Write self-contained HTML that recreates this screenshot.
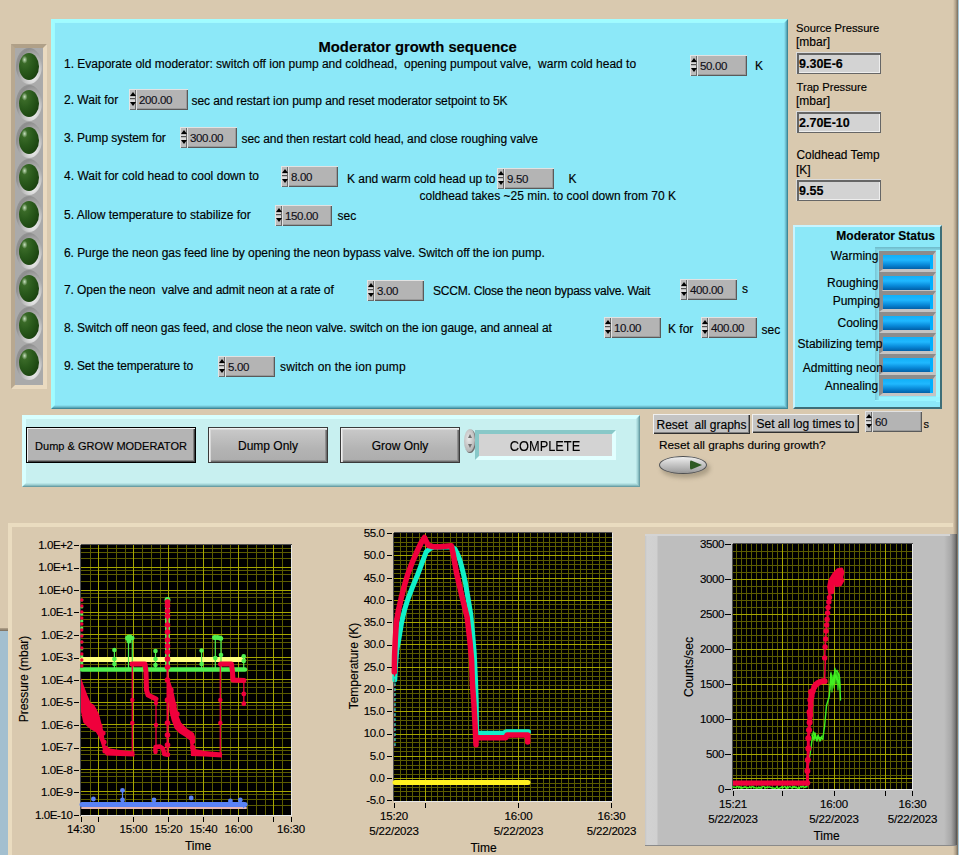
<!DOCTYPE html>
<html><head><meta charset="utf-8"><style>
html,body{margin:0;padding:0;width:959px;height:855px;overflow:hidden;background:#D9C9AF;}
.b{position:absolute;}
.t{position:absolute;white-space:nowrap;font-family:"Liberation Sans", sans-serif;-webkit-text-stroke:0.15px currentColor;}
</style></head><body>
<div class="b" style="left:0;top:0;width:959px;height:855px;background:#D9C9AF;"></div><div class="b" style="left:953px;top:0;width:5px;height:855px;background:linear-gradient(to right,#D9C9AF,#B4A48C 50%,#7A6E5E);"></div><div class="b" style="left:958px;top:0;width:1px;height:855px;background:#A8C8D8;"></div><div class="b" style="left:11px;top:44px;width:28px;height:337px;border:4px solid;border-color:#B0A088 #EADAC0 #EADAC0 #B8A890;background:#AAAAAA;"></div><div class="b" style="left:16px;top:48px;width:26px;height:36px;border-radius:50%;background:radial-gradient(ellipse at 65% 75%, #F4F4F4 0%, #C8C8C8 35%, #8E8E8E 70%, #A0A0A0 100%);"></div><div class="b" style="left:19px;top:52.5px;width:20px;height:27px;border-radius:50%;background:radial-gradient(ellipse at 28% 25%, #C8E0C0 0%, #3A6A28 14%, #2A5A1C 40%, #1E4812 70%, #0E2A08 100%);"></div><div class="b" style="left:16px;top:85px;width:26px;height:36px;border-radius:50%;background:radial-gradient(ellipse at 65% 75%, #F4F4F4 0%, #C8C8C8 35%, #8E8E8E 70%, #A0A0A0 100%);"></div><div class="b" style="left:19px;top:89.5px;width:20px;height:27px;border-radius:50%;background:radial-gradient(ellipse at 28% 25%, #C8E0C0 0%, #3A6A28 14%, #2A5A1C 40%, #1E4812 70%, #0E2A08 100%);"></div><div class="b" style="left:16px;top:122px;width:26px;height:36px;border-radius:50%;background:radial-gradient(ellipse at 65% 75%, #F4F4F4 0%, #C8C8C8 35%, #8E8E8E 70%, #A0A0A0 100%);"></div><div class="b" style="left:19px;top:126.5px;width:20px;height:27px;border-radius:50%;background:radial-gradient(ellipse at 28% 25%, #C8E0C0 0%, #3A6A28 14%, #2A5A1C 40%, #1E4812 70%, #0E2A08 100%);"></div><div class="b" style="left:16px;top:159px;width:26px;height:36px;border-radius:50%;background:radial-gradient(ellipse at 65% 75%, #F4F4F4 0%, #C8C8C8 35%, #8E8E8E 70%, #A0A0A0 100%);"></div><div class="b" style="left:19px;top:163.5px;width:20px;height:27px;border-radius:50%;background:radial-gradient(ellipse at 28% 25%, #C8E0C0 0%, #3A6A28 14%, #2A5A1C 40%, #1E4812 70%, #0E2A08 100%);"></div><div class="b" style="left:16px;top:196px;width:26px;height:36px;border-radius:50%;background:radial-gradient(ellipse at 65% 75%, #F4F4F4 0%, #C8C8C8 35%, #8E8E8E 70%, #A0A0A0 100%);"></div><div class="b" style="left:19px;top:200.5px;width:20px;height:27px;border-radius:50%;background:radial-gradient(ellipse at 28% 25%, #C8E0C0 0%, #3A6A28 14%, #2A5A1C 40%, #1E4812 70%, #0E2A08 100%);"></div><div class="b" style="left:16px;top:233px;width:26px;height:36px;border-radius:50%;background:radial-gradient(ellipse at 65% 75%, #F4F4F4 0%, #C8C8C8 35%, #8E8E8E 70%, #A0A0A0 100%);"></div><div class="b" style="left:19px;top:237.5px;width:20px;height:27px;border-radius:50%;background:radial-gradient(ellipse at 28% 25%, #C8E0C0 0%, #3A6A28 14%, #2A5A1C 40%, #1E4812 70%, #0E2A08 100%);"></div><div class="b" style="left:16px;top:270px;width:26px;height:36px;border-radius:50%;background:radial-gradient(ellipse at 65% 75%, #F4F4F4 0%, #C8C8C8 35%, #8E8E8E 70%, #A0A0A0 100%);"></div><div class="b" style="left:19px;top:274.5px;width:20px;height:27px;border-radius:50%;background:radial-gradient(ellipse at 28% 25%, #C8E0C0 0%, #3A6A28 14%, #2A5A1C 40%, #1E4812 70%, #0E2A08 100%);"></div><div class="b" style="left:16px;top:307px;width:26px;height:36px;border-radius:50%;background:radial-gradient(ellipse at 65% 75%, #F4F4F4 0%, #C8C8C8 35%, #8E8E8E 70%, #A0A0A0 100%);"></div><div class="b" style="left:19px;top:311.5px;width:20px;height:27px;border-radius:50%;background:radial-gradient(ellipse at 28% 25%, #C8E0C0 0%, #3A6A28 14%, #2A5A1C 40%, #1E4812 70%, #0E2A08 100%);"></div><div class="b" style="left:16px;top:344px;width:26px;height:36px;border-radius:50%;background:radial-gradient(ellipse at 65% 75%, #F4F4F4 0%, #C8C8C8 35%, #8E8E8E 70%, #A0A0A0 100%);"></div><div class="b" style="left:19px;top:348.5px;width:20px;height:27px;border-radius:50%;background:radial-gradient(ellipse at 28% 25%, #C8E0C0 0%, #3A6A28 14%, #2A5A1C 40%, #1E4812 70%, #0E2A08 100%);"></div><div class="b" style="left:51px;top:19px;width:735px;height:388px;border:1px solid;border-color:#A4FCFF #3E8898 #3E8898 #A4FCFF;"><div style="position:absolute;left:0;top:0;right:0;bottom:0;border:1px solid;border-color:#A0FCFF #5AAABB #5AAABB #A0FCFF;"><div style="position:absolute;left:0;top:0;right:0;bottom:0;border:1px solid;border-color:#A0FCFF #72C4D4 #72C4D4 #A0FCFF;"><div style="position:absolute;left:0;top:0;right:0;bottom:0;border:1px solid;border-color:#A0FAFF #84DCEC #84DCEC #A0FAFF;"><div style="position:absolute;left:0;top:0;right:0;bottom:0;background:#8CE8F8;"></div></div></div></div></div><div class="t" style="left:318.5px;top:39.07px;font-size:14.8px;line-height:16.8px;color:#000000;font-weight:bold;">Moderator growth sequence</div><div class="t" style="left:64px;top:57.04px;font-size:12px;line-height:14px;color:#000000;">1. Evaporate old moderator: switch off ion pump and coldhead,&nbsp; opening pumpout valve,&nbsp; warm cold head to</div><div class="b" style="left:690px;top:55px;width:7px;height:21px;background:#BCBCBC;box-shadow:inset 1px 1px 0 #E4E4E4, inset -1px -1px 0 #6A6A6A;"></div><div class="b" style="left:690.5px;top:58.0px;width:0;height:0;border-left:3px solid transparent;border-right:3px solid transparent;border-bottom:4.5px solid #000;"></div><div class="b" style="left:690.5px;top:68.0px;width:0;height:0;border-left:3px solid transparent;border-right:3px solid transparent;border-top:4.5px solid #000;"></div><div class="b" style="left:691px;top:62.5px;width:5px;height:1.5px;background:#DADADA;"></div><div class="b" style="left:691px;top:64.0px;width:5px;height:1px;background:#505050;"></div><div class="b" style="left:691px;top:66.0px;width:5px;height:1.5px;background:#DADADA;"></div><div class="b" style="left:697px;top:55px;width:50px;height:21px;background:#B4B4B4;box-shadow:inset 1px 1px 0 #E2E2E2, inset -1px -1px 0 #5A5A5A, inset -2px -2px 0 #9A9A9A;"></div><div class="t" style="left:700px;top:60.27px;font-size:11.5px;line-height:13.5px;color:#101018;letter-spacing:-0.35px;">50.00</div><div class="t" style="left:755px;top:59.04px;font-size:12px;line-height:14px;color:#000000;">K</div><div class="t" style="left:64px;top:92.54px;font-size:12px;line-height:14px;color:#000000;">2. Wait for</div><div class="b" style="left:129px;top:89px;width:7px;height:21px;background:#BCBCBC;box-shadow:inset 1px 1px 0 #E4E4E4, inset -1px -1px 0 #6A6A6A;"></div><div class="b" style="left:129.5px;top:92.0px;width:0;height:0;border-left:3px solid transparent;border-right:3px solid transparent;border-bottom:4.5px solid #000;"></div><div class="b" style="left:129.5px;top:102.0px;width:0;height:0;border-left:3px solid transparent;border-right:3px solid transparent;border-top:4.5px solid #000;"></div><div class="b" style="left:130px;top:96.5px;width:5px;height:1.5px;background:#DADADA;"></div><div class="b" style="left:130px;top:98.0px;width:5px;height:1px;background:#505050;"></div><div class="b" style="left:130px;top:100.0px;width:5px;height:1.5px;background:#DADADA;"></div><div class="b" style="left:136px;top:89px;width:52px;height:21px;background:#B4B4B4;box-shadow:inset 1px 1px 0 #E2E2E2, inset -1px -1px 0 #5A5A5A, inset -2px -2px 0 #9A9A9A;"></div><div class="t" style="left:139px;top:94.27px;font-size:11.5px;line-height:13.5px;color:#101018;letter-spacing:-0.35px;">200.00</div><div class="t" style="left:191.5px;top:93.54px;font-size:12px;line-height:14px;color:#000000;letter-spacing:-0.07px;">sec and restart ion pump and reset moderator setpoint to 5K</div><div class="t" style="left:64px;top:131.44px;font-size:12px;line-height:14px;color:#000000;letter-spacing:-0.09px;">3. Pump system for</div><div class="b" style="left:180px;top:127px;width:7px;height:21px;background:#BCBCBC;box-shadow:inset 1px 1px 0 #E4E4E4, inset -1px -1px 0 #6A6A6A;"></div><div class="b" style="left:180.5px;top:130.0px;width:0;height:0;border-left:3px solid transparent;border-right:3px solid transparent;border-bottom:4.5px solid #000;"></div><div class="b" style="left:180.5px;top:140.0px;width:0;height:0;border-left:3px solid transparent;border-right:3px solid transparent;border-top:4.5px solid #000;"></div><div class="b" style="left:181px;top:134.5px;width:5px;height:1.5px;background:#DADADA;"></div><div class="b" style="left:181px;top:136.0px;width:5px;height:1px;background:#505050;"></div><div class="b" style="left:181px;top:138.0px;width:5px;height:1.5px;background:#DADADA;"></div><div class="b" style="left:187px;top:127px;width:50px;height:21px;background:#B4B4B4;box-shadow:inset 1px 1px 0 #E2E2E2, inset -1px -1px 0 #5A5A5A, inset -2px -2px 0 #9A9A9A;"></div><div class="t" style="left:190px;top:132.27px;font-size:11.5px;line-height:13.5px;color:#101018;letter-spacing:-0.35px;">300.00</div><div class="t" style="left:241.5px;top:132.44px;font-size:12px;line-height:14px;color:#000000;letter-spacing:-0.08px;">sec and then restart cold head, and close roughing valve</div><div class="t" style="left:64px;top:169.04px;font-size:12px;line-height:14px;color:#000000;letter-spacing:0.035px;">4. Wait for cold head to cool down to</div><div class="b" style="left:281px;top:166px;width:7px;height:21px;background:#BCBCBC;box-shadow:inset 1px 1px 0 #E4E4E4, inset -1px -1px 0 #6A6A6A;"></div><div class="b" style="left:281.5px;top:169.0px;width:0;height:0;border-left:3px solid transparent;border-right:3px solid transparent;border-bottom:4.5px solid #000;"></div><div class="b" style="left:281.5px;top:179.0px;width:0;height:0;border-left:3px solid transparent;border-right:3px solid transparent;border-top:4.5px solid #000;"></div><div class="b" style="left:282px;top:173.5px;width:5px;height:1.5px;background:#DADADA;"></div><div class="b" style="left:282px;top:175.0px;width:5px;height:1px;background:#505050;"></div><div class="b" style="left:282px;top:177.0px;width:5px;height:1.5px;background:#DADADA;"></div><div class="b" style="left:288px;top:166px;width:50px;height:21px;background:#B4B4B4;box-shadow:inset 1px 1px 0 #E2E2E2, inset -1px -1px 0 #5A5A5A, inset -2px -2px 0 #9A9A9A;"></div><div class="t" style="left:291px;top:171.27px;font-size:11.5px;line-height:13.5px;color:#101018;letter-spacing:-0.35px;">8.00</div><div class="t" style="left:347px;top:171.54px;font-size:12px;line-height:14px;color:#000000;letter-spacing:-0.04px;">K and warm cold head up to</div><div class="b" style="left:497px;top:168px;width:7px;height:21px;background:#BCBCBC;box-shadow:inset 1px 1px 0 #E4E4E4, inset -1px -1px 0 #6A6A6A;"></div><div class="b" style="left:497.5px;top:171.0px;width:0;height:0;border-left:3px solid transparent;border-right:3px solid transparent;border-bottom:4.5px solid #000;"></div><div class="b" style="left:497.5px;top:181.0px;width:0;height:0;border-left:3px solid transparent;border-right:3px solid transparent;border-top:4.5px solid #000;"></div><div class="b" style="left:498px;top:175.5px;width:5px;height:1.5px;background:#DADADA;"></div><div class="b" style="left:498px;top:177.0px;width:5px;height:1px;background:#505050;"></div><div class="b" style="left:498px;top:179.0px;width:5px;height:1.5px;background:#DADADA;"></div><div class="b" style="left:504px;top:168px;width:50px;height:21px;background:#B4B4B4;box-shadow:inset 1px 1px 0 #E2E2E2, inset -1px -1px 0 #5A5A5A, inset -2px -2px 0 #9A9A9A;"></div><div class="t" style="left:507px;top:173.27px;font-size:11.5px;line-height:13.5px;color:#101018;letter-spacing:-0.35px;">9.50</div><div class="t" style="left:568.5px;top:171.54px;font-size:12px;line-height:14px;color:#000000;">K</div><div class="t" style="left:419.5px;top:189.04px;font-size:12px;line-height:14px;color:#000000;">coldhead takes ~25 min. to cool down from 70 K</div><div class="t" style="left:64px;top:207.64px;font-size:12px;line-height:14px;color:#000000;">5. Allow temperature to stabilize for</div><div class="b" style="left:275px;top:205px;width:7px;height:21px;background:#BCBCBC;box-shadow:inset 1px 1px 0 #E4E4E4, inset -1px -1px 0 #6A6A6A;"></div><div class="b" style="left:275.5px;top:208.0px;width:0;height:0;border-left:3px solid transparent;border-right:3px solid transparent;border-bottom:4.5px solid #000;"></div><div class="b" style="left:275.5px;top:218.0px;width:0;height:0;border-left:3px solid transparent;border-right:3px solid transparent;border-top:4.5px solid #000;"></div><div class="b" style="left:276px;top:212.5px;width:5px;height:1.5px;background:#DADADA;"></div><div class="b" style="left:276px;top:214.0px;width:5px;height:1px;background:#505050;"></div><div class="b" style="left:276px;top:216.0px;width:5px;height:1.5px;background:#DADADA;"></div><div class="b" style="left:282px;top:205px;width:50px;height:21px;background:#B4B4B4;box-shadow:inset 1px 1px 0 #E2E2E2, inset -1px -1px 0 #5A5A5A, inset -2px -2px 0 #9A9A9A;"></div><div class="t" style="left:285px;top:210.27px;font-size:11.5px;line-height:13.5px;color:#101018;letter-spacing:-0.35px;">150.00</div><div class="t" style="left:337.5px;top:208.64px;font-size:12px;line-height:14px;color:#000000;">sec</div><div class="t" style="left:64px;top:245.74px;font-size:12px;line-height:14px;color:#000000;letter-spacing:-0.06px;">6. Purge the neon gas feed line by opening the neon bypass valve. Switch off the ion pump.</div><div class="t" style="left:64px;top:282.54px;font-size:12px;line-height:14px;color:#000000;letter-spacing:-0.088px;">7. Open the neon&nbsp; valve and admit neon at a rate of</div><div class="b" style="left:367px;top:280px;width:7px;height:21px;background:#BCBCBC;box-shadow:inset 1px 1px 0 #E4E4E4, inset -1px -1px 0 #6A6A6A;"></div><div class="b" style="left:367.5px;top:283.0px;width:0;height:0;border-left:3px solid transparent;border-right:3px solid transparent;border-bottom:4.5px solid #000;"></div><div class="b" style="left:367.5px;top:293.0px;width:0;height:0;border-left:3px solid transparent;border-right:3px solid transparent;border-top:4.5px solid #000;"></div><div class="b" style="left:368px;top:287.5px;width:5px;height:1.5px;background:#DADADA;"></div><div class="b" style="left:368px;top:289.0px;width:5px;height:1px;background:#505050;"></div><div class="b" style="left:368px;top:291.0px;width:5px;height:1.5px;background:#DADADA;"></div><div class="b" style="left:374px;top:280px;width:50px;height:21px;background:#B4B4B4;box-shadow:inset 1px 1px 0 #E2E2E2, inset -1px -1px 0 #5A5A5A, inset -2px -2px 0 #9A9A9A;"></div><div class="t" style="left:377px;top:285.27px;font-size:11.5px;line-height:13.5px;color:#101018;letter-spacing:-0.35px;">3.00</div><div class="t" style="left:433px;top:283.54px;font-size:12px;line-height:14px;color:#000000;letter-spacing:-0.22px;">SCCM. Close the neon bypass valve. Wait</div><div class="b" style="left:680px;top:279px;width:7px;height:21px;background:#BCBCBC;box-shadow:inset 1px 1px 0 #E4E4E4, inset -1px -1px 0 #6A6A6A;"></div><div class="b" style="left:680.5px;top:282.0px;width:0;height:0;border-left:3px solid transparent;border-right:3px solid transparent;border-bottom:4.5px solid #000;"></div><div class="b" style="left:680.5px;top:292.0px;width:0;height:0;border-left:3px solid transparent;border-right:3px solid transparent;border-top:4.5px solid #000;"></div><div class="b" style="left:681px;top:286.5px;width:5px;height:1.5px;background:#DADADA;"></div><div class="b" style="left:681px;top:288.0px;width:5px;height:1px;background:#505050;"></div><div class="b" style="left:681px;top:290.0px;width:5px;height:1.5px;background:#DADADA;"></div><div class="b" style="left:687px;top:279px;width:50px;height:21px;background:#B4B4B4;box-shadow:inset 1px 1px 0 #E2E2E2, inset -1px -1px 0 #5A5A5A, inset -2px -2px 0 #9A9A9A;"></div><div class="t" style="left:690px;top:284.27px;font-size:11.5px;line-height:13.5px;color:#101018;letter-spacing:-0.35px;">400.00</div><div class="t" style="left:742px;top:281.54px;font-size:12px;line-height:14px;color:#000000;">s</div><div class="t" style="left:64px;top:321.24px;font-size:12px;line-height:14px;color:#000000;letter-spacing:-0.09px;">8. Switch off neon gas feed, and close the neon valve. switch on the ion gauge, and anneal at</div><div class="b" style="left:604px;top:317px;width:7px;height:21px;background:#BCBCBC;box-shadow:inset 1px 1px 0 #E4E4E4, inset -1px -1px 0 #6A6A6A;"></div><div class="b" style="left:604.5px;top:320.0px;width:0;height:0;border-left:3px solid transparent;border-right:3px solid transparent;border-bottom:4.5px solid #000;"></div><div class="b" style="left:604.5px;top:330.0px;width:0;height:0;border-left:3px solid transparent;border-right:3px solid transparent;border-top:4.5px solid #000;"></div><div class="b" style="left:605px;top:324.5px;width:5px;height:1.5px;background:#DADADA;"></div><div class="b" style="left:605px;top:326.0px;width:5px;height:1px;background:#505050;"></div><div class="b" style="left:605px;top:328.0px;width:5px;height:1.5px;background:#DADADA;"></div><div class="b" style="left:611px;top:317px;width:50px;height:21px;background:#B4B4B4;box-shadow:inset 1px 1px 0 #E2E2E2, inset -1px -1px 0 #5A5A5A, inset -2px -2px 0 #9A9A9A;"></div><div class="t" style="left:614px;top:322.27px;font-size:11.5px;line-height:13.5px;color:#101018;letter-spacing:-0.35px;">10.00</div><div class="t" style="left:668px;top:322.24px;font-size:12px;line-height:14px;color:#000000;">K for</div><div class="b" style="left:701px;top:317px;width:7px;height:21px;background:#BCBCBC;box-shadow:inset 1px 1px 0 #E4E4E4, inset -1px -1px 0 #6A6A6A;"></div><div class="b" style="left:701.5px;top:320.0px;width:0;height:0;border-left:3px solid transparent;border-right:3px solid transparent;border-bottom:4.5px solid #000;"></div><div class="b" style="left:701.5px;top:330.0px;width:0;height:0;border-left:3px solid transparent;border-right:3px solid transparent;border-top:4.5px solid #000;"></div><div class="b" style="left:702px;top:324.5px;width:5px;height:1.5px;background:#DADADA;"></div><div class="b" style="left:702px;top:326.0px;width:5px;height:1px;background:#505050;"></div><div class="b" style="left:702px;top:328.0px;width:5px;height:1.5px;background:#DADADA;"></div><div class="b" style="left:708px;top:317px;width:49px;height:21px;background:#B4B4B4;box-shadow:inset 1px 1px 0 #E2E2E2, inset -1px -1px 0 #5A5A5A, inset -2px -2px 0 #9A9A9A;"></div><div class="t" style="left:711px;top:322.27px;font-size:11.5px;line-height:13.5px;color:#101018;letter-spacing:-0.35px;">400.00</div><div class="t" style="left:761.5px;top:323.24px;font-size:12px;line-height:14px;color:#000000;">sec</div><div class="t" style="left:64px;top:358.74px;font-size:12px;line-height:14px;color:#000000;letter-spacing:-0.15px;">9. Set the temperature to</div><div class="b" style="left:218px;top:356px;width:7px;height:21px;background:#BCBCBC;box-shadow:inset 1px 1px 0 #E4E4E4, inset -1px -1px 0 #6A6A6A;"></div><div class="b" style="left:218.5px;top:359.0px;width:0;height:0;border-left:3px solid transparent;border-right:3px solid transparent;border-bottom:4.5px solid #000;"></div><div class="b" style="left:218.5px;top:369.0px;width:0;height:0;border-left:3px solid transparent;border-right:3px solid transparent;border-top:4.5px solid #000;"></div><div class="b" style="left:219px;top:363.5px;width:5px;height:1.5px;background:#DADADA;"></div><div class="b" style="left:219px;top:365.0px;width:5px;height:1px;background:#505050;"></div><div class="b" style="left:219px;top:367.0px;width:5px;height:1.5px;background:#DADADA;"></div><div class="b" style="left:225px;top:356px;width:50px;height:21px;background:#B4B4B4;box-shadow:inset 1px 1px 0 #E2E2E2, inset -1px -1px 0 #5A5A5A, inset -2px -2px 0 #9A9A9A;"></div><div class="t" style="left:228px;top:361.27px;font-size:11.5px;line-height:13.5px;color:#101018;letter-spacing:-0.35px;">5.00</div><div class="t" style="left:280px;top:359.74px;font-size:12px;line-height:14px;color:#000000;letter-spacing:0.14px;">switch on the ion pump</div><div class="t" style="left:796px;top:21.72px;font-size:11.2px;line-height:13.2px;color:#000000;">Source Pressure</div><div class="t" style="left:796px;top:35.14px;font-size:12px;line-height:14px;color:#000000;">[mbar]</div><div class="b" style="left:796px;top:52px;width:85px;height:22px;background:#DCDCDC;"></div><div class="b" style="left:797px;top:53px;width:81px;height:18px;border:solid #666666;border-width:2px 1px 1px 2px;background:#D3D3D3;box-shadow:inset -1px -1px 0 #EEEEEE;"></div><div class="t" style="left:799px;top:57.22px;font-size:12.5px;line-height:14.5px;color:#000000;font-weight:bold;">9.30E-6</div><div class="t" style="left:796.5px;top:81.42px;font-size:11.2px;line-height:13.2px;color:#000000;">Trap Pressure</div><div class="t" style="left:796px;top:94.34px;font-size:12px;line-height:14px;color:#000000;">[mbar]</div><div class="b" style="left:796px;top:111px;width:85px;height:22px;background:#DCDCDC;"></div><div class="b" style="left:797px;top:112px;width:81px;height:18px;border:solid #666666;border-width:2px 1px 1px 2px;background:#D3D3D3;box-shadow:inset -1px -1px 0 #EEEEEE;"></div><div class="t" style="left:799px;top:116.22px;font-size:12.5px;line-height:14.5px;color:#000000;font-weight:bold;">2.70E-10</div><div class="t" style="left:796.5px;top:149.03px;font-size:11.9px;line-height:13.9px;color:#000000;">Coldhead Temp</div><div class="t" style="left:796px;top:162.54px;font-size:12px;line-height:14px;color:#000000;">[K]</div><div class="b" style="left:796px;top:179px;width:85px;height:22px;background:#DCDCDC;"></div><div class="b" style="left:797px;top:180px;width:81px;height:18px;border:solid #666666;border-width:2px 1px 1px 2px;background:#D3D3D3;box-shadow:inset -1px -1px 0 #EEEEEE;"></div><div class="t" style="left:799px;top:184.22px;font-size:12.5px;line-height:14.5px;color:#000000;font-weight:bold;">9.55</div><div class="b" style="left:793px;top:225px;width:147px;height:182px;border:1px solid;border-color:#C8F4FF #3E6E78 #3E6E78 #C8F4FF;"><div style="position:absolute;left:0;top:0;right:0;bottom:0;border:1px solid;border-color:#C8F4FF #3E6E78 #3E6E78 #C8F4FF;"><div style="position:absolute;left:0;top:0;right:0;bottom:0;background:#8CE8F8;"></div></div></div><div class="t" style="right:24px;top:228.84px;font-size:12px;line-height:14px;color:#000000;font-weight:bold;text-align:right;">Moderator Status</div><div class="b" style="left:875px;top:247px;width:65px;height:155px;background:linear-gradient(to bottom,#6EB8C8,#8CE8F8 5px);"></div><div class="b" style="left:936px;top:250px;width:4px;height:152px;background:#A0F8FF;"></div><div class="b" style="left:875px;top:397px;width:65px;height:4px;background:#98F4FF;"></div><div class="b" style="left:875px;top:250px;width:4px;height:150px;background:linear-gradient(to right,#78C4D4,#8CE4F4);"></div><div class="b" style="left:879px;top:251px;width:50px;height:14px;border:4px solid;border-width:4px 3px 3px 4px;border-color:#8C8C8C #C4C4C4 #C4C4C4 #8C8C8C;background:linear-gradient(to bottom,#10B0F8 0%,#20B8FF 35%,#0888D8 70%,#0060A8 100%);"></div><div class="b" style="left:930px;top:255px;width:3px;height:14px;background:#00B0FF;"></div><div class="b" style="left:879px;top:272px;width:50px;height:14px;border:4px solid;border-width:4px 3px 3px 4px;border-color:#8C8C8C #C4C4C4 #C4C4C4 #8C8C8C;background:linear-gradient(to bottom,#10B0F8 0%,#20B8FF 35%,#0888D8 70%,#0060A8 100%);"></div><div class="b" style="left:930px;top:276px;width:3px;height:14px;background:#00B0FF;"></div><div class="b" style="left:879px;top:291px;width:50px;height:14px;border:4px solid;border-width:4px 3px 3px 4px;border-color:#8C8C8C #C4C4C4 #C4C4C4 #8C8C8C;background:linear-gradient(to bottom,#10B0F8 0%,#20B8FF 35%,#0888D8 70%,#0060A8 100%);"></div><div class="b" style="left:930px;top:295px;width:3px;height:14px;background:#00B0FF;"></div><div class="b" style="left:879px;top:311.5px;width:50px;height:14px;border:4px solid;border-width:4px 3px 3px 4px;border-color:#8C8C8C #C4C4C4 #C4C4C4 #8C8C8C;background:linear-gradient(to bottom,#10B0F8 0%,#20B8FF 35%,#0888D8 70%,#0060A8 100%);"></div><div class="b" style="left:930px;top:315.5px;width:3px;height:14px;background:#00B0FF;"></div><div class="b" style="left:879px;top:332.5px;width:50px;height:14px;border:4px solid;border-width:4px 3px 3px 4px;border-color:#8C8C8C #C4C4C4 #C4C4C4 #8C8C8C;background:linear-gradient(to bottom,#10B0F8 0%,#20B8FF 35%,#0888D8 70%,#0060A8 100%);"></div><div class="b" style="left:930px;top:336.5px;width:3px;height:14px;background:#00B0FF;"></div><div class="b" style="left:879px;top:353.5px;width:50px;height:14px;border:4px solid;border-width:4px 3px 3px 4px;border-color:#8C8C8C #C4C4C4 #C4C4C4 #8C8C8C;background:linear-gradient(to bottom,#10B0F8 0%,#20B8FF 35%,#0888D8 70%,#0060A8 100%);"></div><div class="b" style="left:930px;top:357.5px;width:3px;height:14px;background:#00B0FF;"></div><div class="b" style="left:879px;top:374.5px;width:50px;height:14px;border:4px solid;border-width:4px 3px 3px 4px;border-color:#8C8C8C #C4C4C4 #C4C4C4 #8C8C8C;background:linear-gradient(to bottom,#10B0F8 0%,#20B8FF 35%,#0888D8 70%,#0060A8 100%);"></div><div class="b" style="left:930px;top:378.5px;width:3px;height:14px;background:#00B0FF;"></div><div class="t" style="right:80.60000000000002px;top:249.44px;font-size:12px;line-height:14px;color:#000000;text-align:right;">Warming</div><div class="t" style="right:80.60000000000002px;top:275.54px;font-size:12px;line-height:14px;color:#000000;text-align:right;">Roughing</div><div class="t" style="right:79px;top:294.34px;font-size:12px;line-height:14px;color:#000000;text-align:right;">Pumping</div><div class="t" style="right:80.79999999999995px;top:316.34px;font-size:12px;line-height:14px;color:#000000;text-align:right;">Cooling</div><div class="t" style="right:76.70000000000005px;top:337.24px;font-size:12px;line-height:14px;color:#000000;text-align:right;">Stabilizing temp</div><div class="t" style="right:76.20000000000005px;top:361.24px;font-size:12px;line-height:14px;color:#000000;text-align:right;">Admitting neon</div><div class="t" style="right:80.79999999999995px;top:378.94px;font-size:12px;line-height:14px;color:#000000;text-align:right;">Annealing</div><div class="b" style="left:22px;top:415px;width:616px;height:70px;border:1px solid;border-color:#D8FFFF #6A9EA4 #6A9EA4 #D8FFFF;"><div style="position:absolute;left:0;top:0;right:0;bottom:0;border:1px solid;border-color:#D8FFFF #88BCC0 #88BCC0 #D8FFFF;"><div style="position:absolute;left:0;top:0;right:0;bottom:0;border:1px solid;border-color:#D8FFFF #A4D4D6 #A4D4D6 #D8FFFF;"><div style="position:absolute;left:0;top:0;right:0;bottom:0;border:1px solid;border-color:#D8FFFF #B8E4E6 #B8E4E6 #D8FFFF;"><div style="position:absolute;left:0;top:0;right:0;bottom:0;background:#C8F0F0;"></div></div></div></div></div><div class="b" style="left:26px;top:427px;width:170px;height:36px;background:#B4B4B4;border:1px solid #000;box-sizing:border-box;box-shadow:inset 1px 1px 0 #F0F0F0, inset -1px -1px 0 #404040, inset -2px -2px 0 #808080;"></div><div class="t" style="left:26.0px;width:170px;top:439.69px;font-size:11px;line-height:13px;color:#000000;text-align:center;">Dump &amp; GROW MODERATOR</div><div class="b" style="left:208px;top:427px;width:120px;height:36px;background:linear-gradient(to bottom,#CACACA,#B4B4B4 60%,#ACACAC);border:1px solid #3A3A3A;box-sizing:border-box;box-shadow:inset 1px 1px 0 #F0F0F0, inset 2px 2px 0 #D8D8D8, inset -1px -1px 0 #6C6C6C, inset -2px -2px 0 #909090;"></div><div class="t" style="left:208.0px;width:120px;top:438.84px;font-size:12px;line-height:14px;color:#000000;text-align:center;">Dump Only</div><div class="b" style="left:340px;top:427px;width:120px;height:36px;background:linear-gradient(to bottom,#CACACA,#B4B4B4 60%,#ACACAC);border:1px solid #3A3A3A;box-sizing:border-box;box-shadow:inset 1px 1px 0 #F0F0F0, inset 2px 2px 0 #D8D8D8, inset -1px -1px 0 #6C6C6C, inset -2px -2px 0 #909090;"></div><div class="t" style="left:340.0px;width:120px;top:438.84px;font-size:12px;line-height:14px;color:#000000;text-align:center;">Grow Only</div><div class="b" style="left:464px;top:429px;width:12px;height:24px;border-radius:50%;background:radial-gradient(ellipse at 40% 40%,#E8E8E8,#A8A8A8 80%);box-shadow:inset -1px -1px 0 #707070;"></div><div class="b" style="left:468px;top:434px;width:0;height:0;border-left:2px solid transparent;border-right:2px solid transparent;border-bottom:4px solid #707070;"></div><div class="b" style="left:468px;top:444px;width:0;height:0;border-left:2px solid transparent;border-right:2px solid transparent;border-top:4px solid #707070;"></div><div class="b" style="left:475px;top:430px;width:133px;height:22px;border:4px solid;border-color:#88C8C8 #E2FFFF #E2FFFF #88C8C8;background:#D3D3D3;"></div><div class="t" style="left:480.0px;width:130px;top:437.57px;font-size:14.8px;line-height:16.8px;color:#000000;text-align:center;transform:scaleX(0.865);">COMPLETE</div><div class="b" style="left:653px;top:414px;width:97px;height:20px;background:#C4C4C4;box-sizing:border-box;box-shadow:inset 1px 1px 0 #F0F0F0, inset -1px -1px 0 #303030, inset -2px -2px 0 #808080;"></div><div class="t" style="left:653.0px;width:97px;top:417.84px;font-size:12px;line-height:14px;color:#000000;text-align:center;">Reset&nbsp; all graphs</div><div class="b" style="left:752px;top:414px;width:107px;height:19px;background:#C4C4C4;box-sizing:border-box;box-shadow:inset 1px 1px 0 #F0F0F0, inset -1px -1px 0 #303030, inset -2px -2px 0 #808080;"></div><div class="t" style="left:752.0px;width:107px;top:416.84px;font-size:12px;line-height:14px;color:#000000;text-align:center;">Set all log times to</div><div class="b" style="left:865px;top:411px;width:7px;height:21px;background:#BCBCBC;box-shadow:inset 1px 1px 0 #E4E4E4, inset -1px -1px 0 #6A6A6A;"></div><div class="b" style="left:865.5px;top:414.0px;width:0;height:0;border-left:3px solid transparent;border-right:3px solid transparent;border-bottom:4.5px solid #000;"></div><div class="b" style="left:865.5px;top:424.0px;width:0;height:0;border-left:3px solid transparent;border-right:3px solid transparent;border-top:4.5px solid #000;"></div><div class="b" style="left:866px;top:418.5px;width:5px;height:1.5px;background:#DADADA;"></div><div class="b" style="left:866px;top:420.0px;width:5px;height:1px;background:#505050;"></div><div class="b" style="left:866px;top:422.0px;width:5px;height:1.5px;background:#DADADA;"></div><div class="b" style="left:872px;top:411px;width:50px;height:21px;background:#B4B4B4;box-shadow:inset 1px 1px 0 #E2E2E2, inset -1px -1px 0 #5A5A5A, inset -2px -2px 0 #9A9A9A;"></div><div class="t" style="left:875px;top:416.27px;font-size:11.5px;line-height:13.5px;color:#101018;letter-spacing:-0.35px;">60</div><div class="t" style="left:923.5px;top:417.69px;font-size:11px;line-height:13px;color:#000000;">s</div><div class="t" style="left:659px;top:439.21px;font-size:11.8px;line-height:13.8px;color:#000000;">Reset all graphs during growth?</div><div class="b" style="left:661px;top:458.5px;width:49px;height:19px;border-radius:50%;background:rgba(90,80,60,0.35);filter:blur(2px);"></div><div class="b" style="left:659px;top:455.5px;width:47.5px;height:18px;border-radius:50%;background:linear-gradient(to bottom,#F4F4F4,#C8C8C8 45%,#A8A8A8 80%,#909090);box-shadow:inset 0 0 0 1px #505050;"></div><div class="b" style="left:690px;top:459.5px;width:0;height:0;border-top:5px solid transparent;border-bottom:5px solid transparent;border-left:12px solid #2E5A22;border-radius:2px;"></div><div class="b" style="left:8px;top:523px;width:941px;height:340px;border-top:4px solid #EADCC0;border-left:4px solid #EADCC0;background:#D9C9AF;"></div><div class="b" style="left:0;top:628px;width:8px;height:3px;background:linear-gradient(to bottom,#B4A48C,#7A6E5E);"></div><div class="b" style="left:0;top:631px;width:8px;height:224px;background:#A3BFCF;"></div><div class="b" style="left:645px;top:534px;width:312px;height:311px;background:linear-gradient(to right,#C6C6C6 0,#D2D2D2 2px,#D0D0D0 12px,#BEBEBE 13px,#BEBEBE 299px,#A8A8A8 306px,#7A7A7A 310px,#505050 312px);"></div><div class="b" style="left:645px;top:534px;width:305px;height:2px;background:#D4D4D4;"></div><div class="b" style="left:645px;top:845px;width:312px;height:1px;background:#8A8A8A;"></div><svg class="b" style="left:0;top:0" width="959" height="855"><g><g shape-rendering="crispEdges"><rect x="81" y="545" width="210" height="270" fill="#000"/><line x1="90.5" y1="545" x2="90.5" y2="815" stroke="#5C5C00" stroke-width="1"/><line x1="107.5" y1="545" x2="107.5" y2="815" stroke="#5C5C00" stroke-width="1"/><line x1="116.5" y1="545" x2="116.5" y2="815" stroke="#5C5C00" stroke-width="1"/><line x1="125.5" y1="545" x2="125.5" y2="815" stroke="#5C5C00" stroke-width="1"/><line x1="142.5" y1="545" x2="142.5" y2="815" stroke="#5C5C00" stroke-width="1"/><line x1="151.5" y1="545" x2="151.5" y2="815" stroke="#5C5C00" stroke-width="1"/><line x1="160.5" y1="545" x2="160.5" y2="815" stroke="#5C5C00" stroke-width="1"/><line x1="177.5" y1="545" x2="177.5" y2="815" stroke="#5C5C00" stroke-width="1"/><line x1="186.5" y1="545" x2="186.5" y2="815" stroke="#5C5C00" stroke-width="1"/><line x1="195.5" y1="545" x2="195.5" y2="815" stroke="#5C5C00" stroke-width="1"/><line x1="212.5" y1="545" x2="212.5" y2="815" stroke="#5C5C00" stroke-width="1"/><line x1="221.5" y1="545" x2="221.5" y2="815" stroke="#5C5C00" stroke-width="1"/><line x1="230.5" y1="545" x2="230.5" y2="815" stroke="#5C5C00" stroke-width="1"/><line x1="247.5" y1="545" x2="247.5" y2="815" stroke="#5C5C00" stroke-width="1"/><line x1="256.5" y1="545" x2="256.5" y2="815" stroke="#5C5C00" stroke-width="1"/><line x1="265.5" y1="545" x2="265.5" y2="815" stroke="#5C5C00" stroke-width="1"/><line x1="282.5" y1="545" x2="282.5" y2="815" stroke="#5C5C00" stroke-width="1"/><line x1="81" y1="558.5" x2="291" y2="558.5" stroke="#5C5C00" stroke-width="1"/><line x1="81" y1="552.5" x2="291" y2="552.5" stroke="#5C5C00" stroke-width="1"/><line x1="81" y1="548.5" x2="291" y2="548.5" stroke="#5C5C00" stroke-width="1"/><line x1="81" y1="581.5" x2="291" y2="581.5" stroke="#5C5C00" stroke-width="1"/><line x1="81" y1="574.5" x2="291" y2="574.5" stroke="#5C5C00" stroke-width="1"/><line x1="81" y1="570.5" x2="291" y2="570.5" stroke="#5C5C00" stroke-width="1"/><line x1="81" y1="603.5" x2="291" y2="603.5" stroke="#5C5C00" stroke-width="1"/><line x1="81" y1="597.5" x2="291" y2="597.5" stroke="#5C5C00" stroke-width="1"/><line x1="81" y1="593.5" x2="291" y2="593.5" stroke="#5C5C00" stroke-width="1"/><line x1="81" y1="626.5" x2="291" y2="626.5" stroke="#5C5C00" stroke-width="1"/><line x1="81" y1="619.5" x2="291" y2="619.5" stroke="#5C5C00" stroke-width="1"/><line x1="81" y1="615.5" x2="291" y2="615.5" stroke="#5C5C00" stroke-width="1"/><line x1="81" y1="648.5" x2="291" y2="648.5" stroke="#5C5C00" stroke-width="1"/><line x1="81" y1="642.5" x2="291" y2="642.5" stroke="#5C5C00" stroke-width="1"/><line x1="81" y1="638.5" x2="291" y2="638.5" stroke="#5C5C00" stroke-width="1"/><line x1="81" y1="670.5" x2="291" y2="670.5" stroke="#5C5C00" stroke-width="1"/><line x1="81" y1="664.5" x2="291" y2="664.5" stroke="#5C5C00" stroke-width="1"/><line x1="81" y1="660.5" x2="291" y2="660.5" stroke="#5C5C00" stroke-width="1"/><line x1="81" y1="693.5" x2="291" y2="693.5" stroke="#5C5C00" stroke-width="1"/><line x1="81" y1="687.5" x2="291" y2="687.5" stroke="#5C5C00" stroke-width="1"/><line x1="81" y1="682.5" x2="291" y2="682.5" stroke="#5C5C00" stroke-width="1"/><line x1="81" y1="715.5" x2="291" y2="715.5" stroke="#5C5C00" stroke-width="1"/><line x1="81" y1="709.5" x2="291" y2="709.5" stroke="#5C5C00" stroke-width="1"/><line x1="81" y1="705.5" x2="291" y2="705.5" stroke="#5C5C00" stroke-width="1"/><line x1="81" y1="738.5" x2="291" y2="738.5" stroke="#5C5C00" stroke-width="1"/><line x1="81" y1="731.5" x2="291" y2="731.5" stroke="#5C5C00" stroke-width="1"/><line x1="81" y1="727.5" x2="291" y2="727.5" stroke="#5C5C00" stroke-width="1"/><line x1="81" y1="760.5" x2="291" y2="760.5" stroke="#5C5C00" stroke-width="1"/><line x1="81" y1="754.5" x2="291" y2="754.5" stroke="#5C5C00" stroke-width="1"/><line x1="81" y1="750.5" x2="291" y2="750.5" stroke="#5C5C00" stroke-width="1"/><line x1="81" y1="782.5" x2="291" y2="782.5" stroke="#5C5C00" stroke-width="1"/><line x1="81" y1="776.5" x2="291" y2="776.5" stroke="#5C5C00" stroke-width="1"/><line x1="81" y1="772.5" x2="291" y2="772.5" stroke="#5C5C00" stroke-width="1"/><line x1="81" y1="805.5" x2="291" y2="805.5" stroke="#5C5C00" stroke-width="1"/><line x1="81" y1="799.5" x2="291" y2="799.5" stroke="#5C5C00" stroke-width="1"/><line x1="81" y1="794.5" x2="291" y2="794.5" stroke="#5C5C00" stroke-width="1"/><line x1="98.5" y1="545" x2="98.5" y2="815" stroke="#A6A600" stroke-width="1"/><line x1="133.5" y1="545" x2="133.5" y2="815" stroke="#A6A600" stroke-width="1"/><line x1="168.5" y1="545" x2="168.5" y2="815" stroke="#A6A600" stroke-width="1"/><line x1="203.5" y1="545" x2="203.5" y2="815" stroke="#A6A600" stroke-width="1"/><line x1="238.5" y1="545" x2="238.5" y2="815" stroke="#A6A600" stroke-width="1"/><line x1="273.5" y1="545" x2="273.5" y2="815" stroke="#A6A600" stroke-width="1"/><line x1="81" y1="567.5" x2="291" y2="567.5" stroke="#A6A600" stroke-width="1"/><line x1="81" y1="590.5" x2="291" y2="590.5" stroke="#A6A600" stroke-width="1"/><line x1="81" y1="612.5" x2="291" y2="612.5" stroke="#A6A600" stroke-width="1"/><line x1="81" y1="634.5" x2="291" y2="634.5" stroke="#A6A600" stroke-width="1"/><line x1="81" y1="657.5" x2="291" y2="657.5" stroke="#A6A600" stroke-width="1"/><line x1="81" y1="679.5" x2="291" y2="679.5" stroke="#A6A600" stroke-width="1"/><line x1="81" y1="702.5" x2="291" y2="702.5" stroke="#A6A600" stroke-width="1"/><line x1="81" y1="724.5" x2="291" y2="724.5" stroke="#A6A600" stroke-width="1"/><line x1="81" y1="747.5" x2="291" y2="747.5" stroke="#A6A600" stroke-width="1"/><line x1="81" y1="769.5" x2="291" y2="769.5" stroke="#A6A600" stroke-width="1"/><line x1="81" y1="791.5" x2="291" y2="791.5" stroke="#A6A600" stroke-width="1"/><line x1="80.5" y1="544.5" x2="80.5" y2="815.5" stroke="#505050" stroke-width="1"/><line x1="80.5" y1="544.5" x2="291.5" y2="544.5" stroke="#505050" stroke-width="1"/><line x1="80.5" y1="815.5" x2="291.5" y2="815.5" stroke="#E8E8E8" stroke-width="1"/><line x1="291.5" y1="544.5" x2="291.5" y2="815.5" stroke="#E8E8E8" stroke-width="1"/></g><polyline points="82.0,659.5 243.0,659.5" fill="none" stroke="#FFFF80" stroke-width="5" stroke-linejoin="round" stroke-linecap="round" /><polyline points="82.0,669.5 245.0,669.5" fill="none" stroke="#50F050" stroke-width="4.5" stroke-linejoin="round" stroke-linecap="round" /><polyline points="114.4,669.0 114.4,650.0" fill="none" stroke="#50F050" stroke-width="1.2" stroke-linejoin="round" stroke-linecap="round" /><circle cx="114.4" cy="650.0" r="2.3" fill="#50F050"/><circle cx="114.4" cy="659.0" r="2.3" fill="#50F050"/><circle cx="114.4" cy="664.0" r="2.3" fill="#50F050"/><polyline points="128.5,669.0 128.5,637.5" fill="none" stroke="#50F050" stroke-width="1.2" stroke-linejoin="round" stroke-linecap="round" /><circle cx="128.5" cy="637.0" r="2.3" fill="#50F050"/><circle cx="128.5" cy="639.0" r="2.3" fill="#50F050"/><polyline points="132.3,669.0 132.3,638.5" fill="none" stroke="#50F050" stroke-width="1.2" stroke-linejoin="round" stroke-linecap="round" /><circle cx="132.3" cy="638.0" r="2.3" fill="#50F050"/><polyline points="155.5,669.0 155.5,651.0" fill="none" stroke="#50F050" stroke-width="1.2" stroke-linejoin="round" stroke-linecap="round" /><circle cx="155.5" cy="651.0" r="2.3" fill="#50F050"/><circle cx="155.5" cy="659.0" r="2.3" fill="#50F050"/><circle cx="155.5" cy="665.0" r="2.3" fill="#50F050"/><polyline points="201.6,669.0 201.6,650.5" fill="none" stroke="#50F050" stroke-width="1.2" stroke-linejoin="round" stroke-linecap="round" /><circle cx="201.6" cy="650.5" r="2.3" fill="#50F050"/><circle cx="201.6" cy="664.0" r="2.3" fill="#50F050"/><polyline points="215.3,669.0 215.3,637.5" fill="none" stroke="#50F050" stroke-width="1.2" stroke-linejoin="round" stroke-linecap="round" /><circle cx="215.3" cy="637.5" r="2.3" fill="#50F050"/><circle cx="215.3" cy="658.0" r="2.3" fill="#50F050"/><polyline points="221.0,669.0 221.0,638.5" fill="none" stroke="#50F050" stroke-width="1.2" stroke-linejoin="round" stroke-linecap="round" /><circle cx="221.0" cy="638.5" r="2.3" fill="#50F050"/><circle cx="221.0" cy="655.0" r="2.3" fill="#50F050"/><polyline points="243.7,669.0 243.7,656.3" fill="none" stroke="#50F050" stroke-width="1.2" stroke-linejoin="round" stroke-linecap="round" /><circle cx="243.7" cy="656.3" r="2.3" fill="#50F050"/><circle cx="243.7" cy="661.0" r="2.3" fill="#50F050"/><circle cx="127.5" cy="638.0" r="2.5" fill="#50F050"/><circle cx="130.0" cy="637.0" r="2.5" fill="#50F050"/><circle cx="129.0" cy="641.0" r="2.5" fill="#50F050"/><circle cx="214.5" cy="637.5" r="2.5" fill="#50F050"/><circle cx="217.5" cy="637.5" r="2.5" fill="#50F050"/><circle cx="220.0" cy="638.0" r="2.5" fill="#50F050"/><circle cx="81.8" cy="600.0" r="1.6" fill="#50F050"/><circle cx="81.8" cy="607.0" r="1.6" fill="#50F050"/><circle cx="81.8" cy="614.0" r="1.6" fill="#50F050"/><circle cx="81.8" cy="621.0" r="1.6" fill="#50F050"/><circle cx="81.8" cy="628.0" r="1.6" fill="#50F050"/><circle cx="81.8" cy="635.0" r="1.6" fill="#50F050"/><circle cx="81.8" cy="642.0" r="1.6" fill="#50F050"/><circle cx="81.8" cy="649.0" r="1.6" fill="#50F050"/><circle cx="81.8" cy="656.0" r="1.6" fill="#50F050"/><circle cx="81.8" cy="663.0" r="1.6" fill="#50F050"/><polyline points="167.5,669.0 167.5,600.0" fill="none" stroke="#50F050" stroke-width="5" stroke-linejoin="round" stroke-linecap="round" /><circle cx="167.5" cy="600.0" r="3" fill="#50F050"/><circle cx="81.8" cy="600.0" r="1.7" fill="#F0003C"/><circle cx="81.8" cy="606.0" r="1.7" fill="#F0003C"/><circle cx="81.8" cy="612.0" r="1.7" fill="#F0003C"/><circle cx="81.8" cy="618.0" r="1.7" fill="#F0003C"/><circle cx="81.8" cy="624.0" r="1.7" fill="#F0003C"/><circle cx="81.8" cy="630.0" r="1.7" fill="#F0003C"/><circle cx="81.8" cy="636.0" r="1.7" fill="#F0003C"/><circle cx="81.8" cy="642.0" r="1.7" fill="#F0003C"/><circle cx="81.8" cy="648.0" r="1.7" fill="#F0003C"/><circle cx="81.8" cy="654.0" r="1.7" fill="#F0003C"/><circle cx="81.8" cy="660.0" r="1.7" fill="#F0003C"/><circle cx="81.8" cy="666.0" r="1.7" fill="#F0003C"/><polygon points="81,678 84.3,687 87.5,695.4 90.6,702.7 93.8,704.8 95.9,708 99,714.3 101.2,722.7 103.3,731 104.5,740 105.5,746 110,748.5 120,750 134.5,751.5 134.5,756.5 120,756 106,755.5 103,750 101.2,743.6 99,737.3 95.9,732 91.7,729.9 87.5,726.7 83.3,722.5 81,712" fill="#F0003C"/><circle cx="103.0" cy="733.0" r="2.6" fill="#F0003C"/><circle cx="104.0" cy="742.0" r="2.6" fill="#F0003C"/><circle cx="105.5" cy="748.0" r="2.6" fill="#F0003C"/><circle cx="86.0" cy="700.0" r="2.6" fill="#F0003C"/><circle cx="92.0" cy="712.0" r="2.6" fill="#F0003C"/><circle cx="97.0" cy="718.0" r="2.6" fill="#F0003C"/><circle cx="100.0" cy="726.0" r="2.6" fill="#F0003C"/><circle cx="105.0" cy="751.0" r="2.6" fill="#F0003C"/><polyline points="132.3,755.0 132.3,664.0" fill="none" stroke="#F0003C" stroke-width="1.3" stroke-linejoin="round" stroke-linecap="round" /><circle cx="132.3" cy="700.0" r="2.2" fill="#F0003C"/><circle cx="132.3" cy="723.0" r="2.2" fill="#F0003C"/><polyline points="132.0,664.0 145.0,664.0 146.0,672.0 146.5,690.0 148.0,695.0 152.0,697.0 156.0,699.0" fill="none" stroke="#F0003C" stroke-width="5" stroke-linejoin="round" stroke-linecap="round" /><polyline points="156.0,699.0 156.0,752.0" fill="none" stroke="#F0003C" stroke-width="1.3" stroke-linejoin="round" stroke-linecap="round" /><circle cx="156.0" cy="703.0" r="2.2" fill="#F0003C"/><circle cx="156.0" cy="725.0" r="2.2" fill="#F0003C"/><polyline points="155.5,752.0 155.5,747.0 160.0,746.5 163.0,748.5 164.2,754.0 168.0,754.7" fill="none" stroke="#F0003C" stroke-width="4.5" stroke-linejoin="round" stroke-linecap="round" /><polyline points="167.5,756.0 167.5,600.0" fill="none" stroke="#F0003C" stroke-width="2" stroke-linejoin="round" stroke-linecap="round" /><circle cx="167.5" cy="602.0" r="2.8" fill="#F0003C"/><circle cx="167.5" cy="606.0" r="2.8" fill="#F0003C"/><circle cx="167.5" cy="611.0" r="2.8" fill="#F0003C"/><circle cx="167.5" cy="616.0" r="2.8" fill="#F0003C"/><circle cx="167.5" cy="625.0" r="2.8" fill="#F0003C"/><circle cx="167.5" cy="632.0" r="2.8" fill="#F0003C"/><circle cx="167.5" cy="640.0" r="2.8" fill="#F0003C"/><circle cx="167.5" cy="646.0" r="2.8" fill="#F0003C"/><circle cx="167.5" cy="652.0" r="2.8" fill="#F0003C"/><circle cx="167.5" cy="659.0" r="2.8" fill="#F0003C"/><circle cx="167.5" cy="667.0" r="2.8" fill="#F0003C"/><circle cx="167.5" cy="680.0" r="2.8" fill="#F0003C"/><circle cx="167.5" cy="700.0" r="2.8" fill="#F0003C"/><circle cx="167.5" cy="723.0" r="2.8" fill="#F0003C"/><circle cx="167.5" cy="735.0" r="2.8" fill="#F0003C"/><circle cx="167.5" cy="745.0" r="2.8" fill="#F0003C"/><polygon points="167,678 170.6,682.7 173.8,693.3 176,704 178.5,716 181.2,722.7 187.5,729 193.8,733 195.5,738 193.5,744 194.5,749 205,751 222,752.5 222,757.5 205,756.5 191,756 190.5,746.8 190,740.4 185.4,737 179,733 174.8,728.8 171.7,720.4 169.5,712 168.5,700" fill="#F0003C"/><circle cx="192.5" cy="741.5" r="2.7" fill="#F0003C"/><circle cx="192.7" cy="747.4" r="2.7" fill="#F0003C"/><circle cx="194.0" cy="752.0" r="2.7" fill="#F0003C"/><circle cx="171.0" cy="690.0" r="2.7" fill="#F0003C"/><circle cx="174.0" cy="705.0" r="2.7" fill="#F0003C"/><circle cx="177.0" cy="714.0" r="2.7" fill="#F0003C"/><polyline points="220.3,755.0 220.3,664.0" fill="none" stroke="#F0003C" stroke-width="1.3" stroke-linejoin="round" stroke-linecap="round" /><circle cx="220.3" cy="700.0" r="2.2" fill="#F0003C"/><circle cx="220.3" cy="723.0" r="2.2" fill="#F0003C"/><polyline points="220.5,664.0 231.5,664.0 232.5,672.0 233.0,680.0 244.0,680.5" fill="none" stroke="#F0003C" stroke-width="5" stroke-linejoin="round" stroke-linecap="round" /><polyline points="243.8,680.0 243.8,704.0" fill="none" stroke="#F0003C" stroke-width="1.3" stroke-linejoin="round" stroke-linecap="round" /><circle cx="243.8" cy="694.0" r="2.4" fill="#F0003C"/><circle cx="243.8" cy="703.7" r="2.4" fill="#F0003C"/><polyline points="82.0,808.0 246.0,808.0" fill="none" stroke="#E6B4B0" stroke-width="2" stroke-linejoin="round" stroke-linecap="round" /><polyline points="82.0,804.5 245.0,804.5" fill="none" stroke="#5A82F5" stroke-width="5" stroke-linejoin="round" stroke-linecap="round" /><polygon points="243,801.5 247.5,805 243,808.5" fill="#5A82F5"/><circle cx="93.4" cy="799.0" r="2.4" fill="#5A82F5"/><circle cx="154.0" cy="800.0" r="2.4" fill="#5A82F5"/><circle cx="191.2" cy="798.0" r="2.4" fill="#5A82F5"/><circle cx="230.4" cy="801.0" r="2.4" fill="#5A82F5"/><circle cx="240.3" cy="800.0" r="2.4" fill="#5A82F5"/><polyline points="122.5,804.0 122.5,790.3" fill="none" stroke="#5A82F5" stroke-width="1.2" stroke-linejoin="round" stroke-linecap="round" /><circle cx="122.5" cy="790.3" r="2.4" fill="#5A82F5"/><circle cx="122.5" cy="800.0" r="2.4" fill="#5A82F5"/><g shape-rendering="crispEdges"><rect x="394" y="533" width="217.5" height="267.5" fill="#000"/><line x1="400.5" y1="533" x2="400.5" y2="800.5" stroke="#5C5C00" stroke-width="1"/><line x1="406.5" y1="533" x2="406.5" y2="800.5" stroke="#5C5C00" stroke-width="1"/><line x1="412.5" y1="533" x2="412.5" y2="800.5" stroke="#5C5C00" stroke-width="1"/><line x1="419.5" y1="533" x2="419.5" y2="800.5" stroke="#5C5C00" stroke-width="1"/><line x1="431.5" y1="533" x2="431.5" y2="800.5" stroke="#5C5C00" stroke-width="1"/><line x1="437.5" y1="533" x2="437.5" y2="800.5" stroke="#5C5C00" stroke-width="1"/><line x1="443.5" y1="533" x2="443.5" y2="800.5" stroke="#5C5C00" stroke-width="1"/><line x1="450.5" y1="533" x2="450.5" y2="800.5" stroke="#5C5C00" stroke-width="1"/><line x1="456.5" y1="533" x2="456.5" y2="800.5" stroke="#5C5C00" stroke-width="1"/><line x1="462.5" y1="533" x2="462.5" y2="800.5" stroke="#5C5C00" stroke-width="1"/><line x1="468.5" y1="533" x2="468.5" y2="800.5" stroke="#5C5C00" stroke-width="1"/><line x1="474.5" y1="533" x2="474.5" y2="800.5" stroke="#5C5C00" stroke-width="1"/><line x1="481.5" y1="533" x2="481.5" y2="800.5" stroke="#5C5C00" stroke-width="1"/><line x1="487.5" y1="533" x2="487.5" y2="800.5" stroke="#5C5C00" stroke-width="1"/><line x1="493.5" y1="533" x2="493.5" y2="800.5" stroke="#5C5C00" stroke-width="1"/><line x1="499.5" y1="533" x2="499.5" y2="800.5" stroke="#5C5C00" stroke-width="1"/><line x1="505.5" y1="533" x2="505.5" y2="800.5" stroke="#5C5C00" stroke-width="1"/><line x1="512.5" y1="533" x2="512.5" y2="800.5" stroke="#5C5C00" stroke-width="1"/><line x1="524.5" y1="533" x2="524.5" y2="800.5" stroke="#5C5C00" stroke-width="1"/><line x1="530.5" y1="533" x2="530.5" y2="800.5" stroke="#5C5C00" stroke-width="1"/><line x1="537.5" y1="533" x2="537.5" y2="800.5" stroke="#5C5C00" stroke-width="1"/><line x1="543.5" y1="533" x2="543.5" y2="800.5" stroke="#5C5C00" stroke-width="1"/><line x1="549.5" y1="533" x2="549.5" y2="800.5" stroke="#5C5C00" stroke-width="1"/><line x1="555.5" y1="533" x2="555.5" y2="800.5" stroke="#5C5C00" stroke-width="1"/><line x1="561.5" y1="533" x2="561.5" y2="800.5" stroke="#5C5C00" stroke-width="1"/><line x1="568.5" y1="533" x2="568.5" y2="800.5" stroke="#5C5C00" stroke-width="1"/><line x1="574.5" y1="533" x2="574.5" y2="800.5" stroke="#5C5C00" stroke-width="1"/><line x1="580.5" y1="533" x2="580.5" y2="800.5" stroke="#5C5C00" stroke-width="1"/><line x1="586.5" y1="533" x2="586.5" y2="800.5" stroke="#5C5C00" stroke-width="1"/><line x1="592.5" y1="533" x2="592.5" y2="800.5" stroke="#5C5C00" stroke-width="1"/><line x1="599.5" y1="533" x2="599.5" y2="800.5" stroke="#5C5C00" stroke-width="1"/><line x1="605.5" y1="533" x2="605.5" y2="800.5" stroke="#5C5C00" stroke-width="1"/><line x1="394" y1="537.5" x2="611.5" y2="537.5" stroke="#5C5C00" stroke-width="1"/><line x1="394" y1="542.5" x2="611.5" y2="542.5" stroke="#5C5C00" stroke-width="1"/><line x1="394" y1="546.5" x2="611.5" y2="546.5" stroke="#5C5C00" stroke-width="1"/><line x1="394" y1="551.5" x2="611.5" y2="551.5" stroke="#5C5C00" stroke-width="1"/><line x1="394" y1="560.5" x2="611.5" y2="560.5" stroke="#5C5C00" stroke-width="1"/><line x1="394" y1="564.5" x2="611.5" y2="564.5" stroke="#5C5C00" stroke-width="1"/><line x1="394" y1="569.5" x2="611.5" y2="569.5" stroke="#5C5C00" stroke-width="1"/><line x1="394" y1="573.5" x2="611.5" y2="573.5" stroke="#5C5C00" stroke-width="1"/><line x1="394" y1="582.5" x2="611.5" y2="582.5" stroke="#5C5C00" stroke-width="1"/><line x1="394" y1="586.5" x2="611.5" y2="586.5" stroke="#5C5C00" stroke-width="1"/><line x1="394" y1="591.5" x2="611.5" y2="591.5" stroke="#5C5C00" stroke-width="1"/><line x1="394" y1="595.5" x2="611.5" y2="595.5" stroke="#5C5C00" stroke-width="1"/><line x1="394" y1="604.5" x2="611.5" y2="604.5" stroke="#5C5C00" stroke-width="1"/><line x1="394" y1="609.5" x2="611.5" y2="609.5" stroke="#5C5C00" stroke-width="1"/><line x1="394" y1="613.5" x2="611.5" y2="613.5" stroke="#5C5C00" stroke-width="1"/><line x1="394" y1="618.5" x2="611.5" y2="618.5" stroke="#5C5C00" stroke-width="1"/><line x1="394" y1="627.5" x2="611.5" y2="627.5" stroke="#5C5C00" stroke-width="1"/><line x1="394" y1="631.5" x2="611.5" y2="631.5" stroke="#5C5C00" stroke-width="1"/><line x1="394" y1="635.5" x2="611.5" y2="635.5" stroke="#5C5C00" stroke-width="1"/><line x1="394" y1="640.5" x2="611.5" y2="640.5" stroke="#5C5C00" stroke-width="1"/><line x1="394" y1="649.5" x2="611.5" y2="649.5" stroke="#5C5C00" stroke-width="1"/><line x1="394" y1="653.5" x2="611.5" y2="653.5" stroke="#5C5C00" stroke-width="1"/><line x1="394" y1="658.5" x2="611.5" y2="658.5" stroke="#5C5C00" stroke-width="1"/><line x1="394" y1="662.5" x2="611.5" y2="662.5" stroke="#5C5C00" stroke-width="1"/><line x1="394" y1="671.5" x2="611.5" y2="671.5" stroke="#5C5C00" stroke-width="1"/><line x1="394" y1="676.5" x2="611.5" y2="676.5" stroke="#5C5C00" stroke-width="1"/><line x1="394" y1="680.5" x2="611.5" y2="680.5" stroke="#5C5C00" stroke-width="1"/><line x1="394" y1="685.5" x2="611.5" y2="685.5" stroke="#5C5C00" stroke-width="1"/><line x1="394" y1="693.5" x2="611.5" y2="693.5" stroke="#5C5C00" stroke-width="1"/><line x1="394" y1="698.5" x2="611.5" y2="698.5" stroke="#5C5C00" stroke-width="1"/><line x1="394" y1="702.5" x2="611.5" y2="702.5" stroke="#5C5C00" stroke-width="1"/><line x1="394" y1="707.5" x2="611.5" y2="707.5" stroke="#5C5C00" stroke-width="1"/><line x1="394" y1="716.5" x2="611.5" y2="716.5" stroke="#5C5C00" stroke-width="1"/><line x1="394" y1="720.5" x2="611.5" y2="720.5" stroke="#5C5C00" stroke-width="1"/><line x1="394" y1="725.5" x2="611.5" y2="725.5" stroke="#5C5C00" stroke-width="1"/><line x1="394" y1="729.5" x2="611.5" y2="729.5" stroke="#5C5C00" stroke-width="1"/><line x1="394" y1="738.5" x2="611.5" y2="738.5" stroke="#5C5C00" stroke-width="1"/><line x1="394" y1="742.5" x2="611.5" y2="742.5" stroke="#5C5C00" stroke-width="1"/><line x1="394" y1="747.5" x2="611.5" y2="747.5" stroke="#5C5C00" stroke-width="1"/><line x1="394" y1="751.5" x2="611.5" y2="751.5" stroke="#5C5C00" stroke-width="1"/><line x1="394" y1="760.5" x2="611.5" y2="760.5" stroke="#5C5C00" stroke-width="1"/><line x1="394" y1="765.5" x2="611.5" y2="765.5" stroke="#5C5C00" stroke-width="1"/><line x1="394" y1="769.5" x2="611.5" y2="769.5" stroke="#5C5C00" stroke-width="1"/><line x1="394" y1="774.5" x2="611.5" y2="774.5" stroke="#5C5C00" stroke-width="1"/><line x1="394" y1="783.5" x2="611.5" y2="783.5" stroke="#5C5C00" stroke-width="1"/><line x1="394" y1="787.5" x2="611.5" y2="787.5" stroke="#5C5C00" stroke-width="1"/><line x1="394" y1="791.5" x2="611.5" y2="791.5" stroke="#5C5C00" stroke-width="1"/><line x1="394" y1="796.5" x2="611.5" y2="796.5" stroke="#5C5C00" stroke-width="1"/><line x1="425.5" y1="533" x2="425.5" y2="800.5" stroke="#A6A600" stroke-width="1"/><line x1="518.5" y1="533" x2="518.5" y2="800.5" stroke="#A6A600" stroke-width="1"/><line x1="394" y1="555.5" x2="611.5" y2="555.5" stroke="#A6A600" stroke-width="1"/><line x1="394" y1="578.5" x2="611.5" y2="578.5" stroke="#A6A600" stroke-width="1"/><line x1="394" y1="600.5" x2="611.5" y2="600.5" stroke="#A6A600" stroke-width="1"/><line x1="394" y1="622.5" x2="611.5" y2="622.5" stroke="#A6A600" stroke-width="1"/><line x1="394" y1="644.5" x2="611.5" y2="644.5" stroke="#A6A600" stroke-width="1"/><line x1="394" y1="667.5" x2="611.5" y2="667.5" stroke="#A6A600" stroke-width="1"/><line x1="394" y1="689.5" x2="611.5" y2="689.5" stroke="#A6A600" stroke-width="1"/><line x1="394" y1="711.5" x2="611.5" y2="711.5" stroke="#A6A600" stroke-width="1"/><line x1="394" y1="734.5" x2="611.5" y2="734.5" stroke="#A6A600" stroke-width="1"/><line x1="394" y1="756.5" x2="611.5" y2="756.5" stroke="#A6A600" stroke-width="1"/><line x1="394" y1="778.5" x2="611.5" y2="778.5" stroke="#A6A600" stroke-width="1"/><line x1="393.5" y1="532.5" x2="393.5" y2="801.0" stroke="#505050" stroke-width="1"/><line x1="393.5" y1="532.5" x2="612.0" y2="532.5" stroke="#505050" stroke-width="1"/><line x1="393.5" y1="801.0" x2="612.0" y2="801.0" stroke="#E8E8E8" stroke-width="1"/><line x1="612.0" y1="532.5" x2="612.0" y2="801.0" stroke="#E8E8E8" stroke-width="1"/></g><polyline points="394.8,680.0 395.5,665.0 396.8,650.0 398.8,639.4 401.7,621.9 404.5,610.0 408.1,598.5 412.5,587.0 417.5,575.0 422.0,563.0 426.3,551.7 430.4,548.4 434.0,547.0 452.0,547.0 455.0,549.0 458.0,555.0 460.2,561.0 463.0,572.0 465.4,582.6 468.0,598.0 470.7,614.2 472.5,632.0 474.2,652.8 475.5,680.0 476.2,700.0 476.5,733.0 500.0,733.3 504.0,733.0 506.0,731.8 528.5,731.8" fill="none" stroke="#10F0C8" stroke-width="5" stroke-linejoin="round" stroke-linecap="round" /><polyline points="394.3,672.0 394.6,655.0 395.3,639.4 396.4,621.9 398.5,610.0 401.1,598.5 404.0,587.0 407.5,575.0 412.0,563.0 416.9,551.7 421.0,543.0 424.5,537.5 426.5,542.0 428.6,545.5 433.0,546.7 440.0,546.7 451.4,545.8 453.0,552.8 456.7,573.9 462.0,596.7 467.2,617.7 469.8,640.0 471.6,660.0 472.5,685.0 474.0,705.0 475.0,723.7 476.0,744.7 476.0,737.7 505.8,737.7 507.0,735.0 527.7,735.0 527.7,742.0" fill="none" stroke="#F0003C" stroke-width="5.5" stroke-linejoin="round" stroke-linecap="round" /><polyline points="394.6,674.0 394.6,747.0" fill="none" stroke="#F0003C" stroke-width="1.2" stroke-linejoin="round" stroke-linecap="round" stroke-dasharray="2,3"/><polyline points="395.0,676.0 395.0,747.0" fill="none" stroke="#10F0C8" stroke-width="1.2" stroke-linejoin="round" stroke-linecap="round" stroke-dasharray="2,3" stroke-dashoffset="2.5"/><polyline points="395.0,782.5 528.0,782.5" fill="none" stroke="#FFF020" stroke-width="5" stroke-linejoin="round" stroke-linecap="round" /><g shape-rendering="crispEdges"><rect x="733" y="544" width="179" height="245" fill="#000"/><line x1="736.5" y1="544" x2="736.5" y2="789" stroke="#5C5C00" stroke-width="1"/><line x1="741.5" y1="544" x2="741.5" y2="789" stroke="#5C5C00" stroke-width="1"/><line x1="746.5" y1="544" x2="746.5" y2="789" stroke="#5C5C00" stroke-width="1"/><line x1="751.5" y1="544" x2="751.5" y2="789" stroke="#5C5C00" stroke-width="1"/><line x1="756.5" y1="544" x2="756.5" y2="789" stroke="#5C5C00" stroke-width="1"/><line x1="761.5" y1="544" x2="761.5" y2="789" stroke="#5C5C00" stroke-width="1"/><line x1="767.5" y1="544" x2="767.5" y2="789" stroke="#5C5C00" stroke-width="1"/><line x1="772.5" y1="544" x2="772.5" y2="789" stroke="#5C5C00" stroke-width="1"/><line x1="777.5" y1="544" x2="777.5" y2="789" stroke="#5C5C00" stroke-width="1"/><line x1="787.5" y1="544" x2="787.5" y2="789" stroke="#5C5C00" stroke-width="1"/><line x1="792.5" y1="544" x2="792.5" y2="789" stroke="#5C5C00" stroke-width="1"/><line x1="798.5" y1="544" x2="798.5" y2="789" stroke="#5C5C00" stroke-width="1"/><line x1="803.5" y1="544" x2="803.5" y2="789" stroke="#5C5C00" stroke-width="1"/><line x1="808.5" y1="544" x2="808.5" y2="789" stroke="#5C5C00" stroke-width="1"/><line x1="813.5" y1="544" x2="813.5" y2="789" stroke="#5C5C00" stroke-width="1"/><line x1="818.5" y1="544" x2="818.5" y2="789" stroke="#5C5C00" stroke-width="1"/><line x1="823.5" y1="544" x2="823.5" y2="789" stroke="#5C5C00" stroke-width="1"/><line x1="828.5" y1="544" x2="828.5" y2="789" stroke="#5C5C00" stroke-width="1"/><line x1="839.5" y1="544" x2="839.5" y2="789" stroke="#5C5C00" stroke-width="1"/><line x1="844.5" y1="544" x2="844.5" y2="789" stroke="#5C5C00" stroke-width="1"/><line x1="849.5" y1="544" x2="849.5" y2="789" stroke="#5C5C00" stroke-width="1"/><line x1="854.5" y1="544" x2="854.5" y2="789" stroke="#5C5C00" stroke-width="1"/><line x1="859.5" y1="544" x2="859.5" y2="789" stroke="#5C5C00" stroke-width="1"/><line x1="865.5" y1="544" x2="865.5" y2="789" stroke="#5C5C00" stroke-width="1"/><line x1="870.5" y1="544" x2="870.5" y2="789" stroke="#5C5C00" stroke-width="1"/><line x1="875.5" y1="544" x2="875.5" y2="789" stroke="#5C5C00" stroke-width="1"/><line x1="880.5" y1="544" x2="880.5" y2="789" stroke="#5C5C00" stroke-width="1"/><line x1="890.5" y1="544" x2="890.5" y2="789" stroke="#5C5C00" stroke-width="1"/><line x1="896.5" y1="544" x2="896.5" y2="789" stroke="#5C5C00" stroke-width="1"/><line x1="901.5" y1="544" x2="901.5" y2="789" stroke="#5C5C00" stroke-width="1"/><line x1="906.5" y1="544" x2="906.5" y2="789" stroke="#5C5C00" stroke-width="1"/><line x1="733" y1="782.5" x2="912" y2="782.5" stroke="#5C5C00" stroke-width="1"/><line x1="733" y1="775.5" x2="912" y2="775.5" stroke="#5C5C00" stroke-width="1"/><line x1="733" y1="768.5" x2="912" y2="768.5" stroke="#5C5C00" stroke-width="1"/><line x1="733" y1="761.5" x2="912" y2="761.5" stroke="#5C5C00" stroke-width="1"/><line x1="733" y1="747.5" x2="912" y2="747.5" stroke="#5C5C00" stroke-width="1"/><line x1="733" y1="740.5" x2="912" y2="740.5" stroke="#5C5C00" stroke-width="1"/><line x1="733" y1="733.5" x2="912" y2="733.5" stroke="#5C5C00" stroke-width="1"/><line x1="733" y1="726.5" x2="912" y2="726.5" stroke="#5C5C00" stroke-width="1"/><line x1="733" y1="712.5" x2="912" y2="712.5" stroke="#5C5C00" stroke-width="1"/><line x1="733" y1="705.5" x2="912" y2="705.5" stroke="#5C5C00" stroke-width="1"/><line x1="733" y1="698.5" x2="912" y2="698.5" stroke="#5C5C00" stroke-width="1"/><line x1="733" y1="691.5" x2="912" y2="691.5" stroke="#5C5C00" stroke-width="1"/><line x1="733" y1="677.5" x2="912" y2="677.5" stroke="#5C5C00" stroke-width="1"/><line x1="733" y1="670.5" x2="912" y2="670.5" stroke="#5C5C00" stroke-width="1"/><line x1="733" y1="663.5" x2="912" y2="663.5" stroke="#5C5C00" stroke-width="1"/><line x1="733" y1="656.5" x2="912" y2="656.5" stroke="#5C5C00" stroke-width="1"/><line x1="733" y1="642.5" x2="912" y2="642.5" stroke="#5C5C00" stroke-width="1"/><line x1="733" y1="635.5" x2="912" y2="635.5" stroke="#5C5C00" stroke-width="1"/><line x1="733" y1="628.5" x2="912" y2="628.5" stroke="#5C5C00" stroke-width="1"/><line x1="733" y1="621.5" x2="912" y2="621.5" stroke="#5C5C00" stroke-width="1"/><line x1="733" y1="607.5" x2="912" y2="607.5" stroke="#5C5C00" stroke-width="1"/><line x1="733" y1="600.5" x2="912" y2="600.5" stroke="#5C5C00" stroke-width="1"/><line x1="733" y1="593.5" x2="912" y2="593.5" stroke="#5C5C00" stroke-width="1"/><line x1="733" y1="586.5" x2="912" y2="586.5" stroke="#5C5C00" stroke-width="1"/><line x1="733" y1="572.5" x2="912" y2="572.5" stroke="#5C5C00" stroke-width="1"/><line x1="733" y1="565.5" x2="912" y2="565.5" stroke="#5C5C00" stroke-width="1"/><line x1="733" y1="558.5" x2="912" y2="558.5" stroke="#5C5C00" stroke-width="1"/><line x1="733" y1="551.5" x2="912" y2="551.5" stroke="#5C5C00" stroke-width="1"/><line x1="782.5" y1="544" x2="782.5" y2="789" stroke="#A6A600" stroke-width="1"/><line x1="834.5" y1="544" x2="834.5" y2="789" stroke="#A6A600" stroke-width="1"/><line x1="885.5" y1="544" x2="885.5" y2="789" stroke="#A6A600" stroke-width="1"/><line x1="733" y1="754.5" x2="912" y2="754.5" stroke="#A6A600" stroke-width="1"/><line x1="733" y1="719.5" x2="912" y2="719.5" stroke="#A6A600" stroke-width="1"/><line x1="733" y1="684.5" x2="912" y2="684.5" stroke="#A6A600" stroke-width="1"/><line x1="733" y1="649.5" x2="912" y2="649.5" stroke="#A6A600" stroke-width="1"/><line x1="733" y1="614.5" x2="912" y2="614.5" stroke="#A6A600" stroke-width="1"/><line x1="733" y1="579.5" x2="912" y2="579.5" stroke="#A6A600" stroke-width="1"/><line x1="732.5" y1="543.5" x2="732.5" y2="789.5" stroke="#505050" stroke-width="1"/><line x1="732.5" y1="543.5" x2="912.5" y2="543.5" stroke="#505050" stroke-width="1"/><line x1="732.5" y1="789.5" x2="912.5" y2="789.5" stroke="#E8E8E8" stroke-width="1"/><line x1="912.5" y1="543.5" x2="912.5" y2="789.5" stroke="#E8E8E8" stroke-width="1"/></g><line x1="733" y1="778.5" x2="912" y2="778.5" stroke="#A6A600" stroke-width="1" shape-rendering="crispEdges"/><polyline points="733.0,786.7 733.8,787.4 734.6,787.0 735.4,787.5 736.2,787.6 737.0,786.3 737.8,786.1 738.6,788.1 739.4,786.7 740.2,786.7 741.0,788.5 741.8,787.2 742.6,788.1 743.4,787.2 744.2,787.6 745.0,786.5 745.8,787.6 746.6,788.2 747.4,787.4 748.2,787.9 749.0,787.7 749.8,786.3 750.6,787.9 751.4,787.5 752.2,786.8 753.0,786.2 753.8,788.2 754.6,787.2 755.4,787.8 756.2,788.2 757.0,787.8 757.8,788.3 758.6,787.0 759.4,788.0 760.2,787.2 761.0,788.3 761.8,788.2 762.6,786.3 763.4,786.4 764.2,786.6 765.0,788.4 765.8,787.1 766.6,787.6 767.4,786.8 768.2,787.3 769.0,787.0 769.8,786.9 770.6,787.5 771.4,787.5 772.2,788.3 773.0,787.7 773.8,788.3 774.6,788.2 775.4,788.5 776.2,787.7 777.0,786.5 777.8,788.2 778.6,788.4 779.4,788.3 780.2,787.5 781.0,787.8 781.8,786.6 782.6,788.1 783.4,787.5 784.2,786.8 785.0,786.3 785.8,788.1 786.6,788.5 787.4,786.3 788.2,788.0 789.0,787.1 789.8,786.5 790.6,786.8 791.4,787.9 792.2,788.2 793.0,786.2 793.8,787.6 794.6,786.2 795.4,787.8 796.2,786.9 797.0,788.2 797.8,788.5 798.6,787.3 799.4,788.5 800.2,786.8 801.0,786.3 801.8,787.5 802.6,786.2 803.4,786.6 804.2,787.1 805.0,787.6 805.8,786.5 806.6,786.2" fill="none" stroke="#40F020" stroke-width="1.3" stroke-linejoin="round" stroke-linecap="round" /><polyline points="806.8,787.0 807.8,771.0 809.0,759.9 810.6,750.5 812.4,737.4 813.4,731.8 816.2,739.3 820.0,737.4 822.7,739.3 824.6,726.1 826.5,705.5 829.3,696.2 830.8,673.7 833.0,683.0 834.9,670.0 837.7,671.8 839.6,677.5 840.5,700.0" fill="none" stroke="#40F020" stroke-width="1.4" stroke-linejoin="round" stroke-linecap="round" /><polyline points="812.0,735.0 814.0,740.0 815.0,733.0 817.0,741.0 818.0,735.0 820.0,741.0 822.0,736.0" fill="none" stroke="#40F020" stroke-width="1.5" stroke-linejoin="round" stroke-linecap="round" /><polyline points="830.0,690.0 831.0,672.0 832.0,692.0 833.0,675.0 834.0,688.0 835.0,668.0 836.0,684.0 837.0,670.0 838.0,690.0 839.0,674.0 840.0,688.0" fill="none" stroke="#40F020" stroke-width="1.1" stroke-linejoin="round" stroke-linecap="round" /><rect x="733" y="780.5" width="75" height="5.2" fill="#F0003C"/><circle cx="807.5" cy="783.0" r="2.8" fill="#F0003C"/><polyline points="807.6,784.0 807.4,771.0 807.8,759.9 808.3,748.6 808.3,738.3 809.0,729.9 809.6,722.4 810.2,714.9 810.6,705.5 811.5,696.2 814.3,686.8 818.0,683.0 822.7,681.2 824.6,681.2" fill="none" stroke="#F0003C" stroke-width="3" stroke-linejoin="round" stroke-linecap="round" /><polyline points="809.6,722.4 810.2,714.9 810.6,705.5 811.5,696.2 814.3,686.8 818.0,683.0 822.7,681.2 824.6,681.2" fill="none" stroke="#F0003C" stroke-width="5" stroke-linejoin="round" stroke-linecap="round" /><circle cx="807.4" cy="771.0" r="3" fill="#F0003C"/><circle cx="807.8" cy="759.9" r="3" fill="#F0003C"/><circle cx="808.3" cy="748.6" r="3" fill="#F0003C"/><circle cx="808.3" cy="738.3" r="3" fill="#F0003C"/><circle cx="809.0" cy="729.9" r="3" fill="#F0003C"/><circle cx="809.6" cy="722.4" r="3" fill="#F0003C"/><circle cx="810.2" cy="714.9" r="3" fill="#F0003C"/><circle cx="810.6" cy="705.5" r="3" fill="#F0003C"/><circle cx="811.5" cy="696.2" r="3" fill="#F0003C"/><circle cx="814.3" cy="686.8" r="3" fill="#F0003C"/><circle cx="818.0" cy="683.0" r="3" fill="#F0003C"/><circle cx="822.7" cy="681.2" r="3" fill="#F0003C"/><circle cx="824.6" cy="681.2" r="3" fill="#F0003C"/><circle cx="812.5" cy="691.0" r="3" fill="#F0003C"/><circle cx="816.0" cy="684.5" r="3" fill="#F0003C"/><circle cx="820.0" cy="682.0" r="3" fill="#F0003C"/><circle cx="809.5" cy="712.0" r="3" fill="#F0003C"/><circle cx="810.3" cy="700.0" r="3" fill="#F0003C"/><circle cx="811.0" cy="692.0" r="3" fill="#F0003C"/><polyline points="824.6,681.2 825.3,660.0 824.7,657.9 825.1,647.0 826.1,631.1 827.1,619.3 828.1,607.4 829.5,597.5" fill="none" stroke="#F0003C" stroke-width="1.5" stroke-linejoin="round" stroke-linecap="round" /><polygon points="829.6,593.9 828.3,587.1 829.6,580.3 833.7,573.6 837.8,569.5 841.8,568.8 843.2,572.2 841.8,577.6 843.2,580.3 840.5,585.1 836.4,585.8 835.7,580.3 833.7,584.4 833,592.5 831,593.2" fill="#F0003C" stroke="#F0003C" stroke-width="2.5" stroke-linejoin="round"/><circle cx="824.7" cy="657.9" r="2.7" fill="#F0003C"/><circle cx="825.1" cy="647.0" r="2.7" fill="#F0003C"/><circle cx="826.1" cy="631.1" r="2.7" fill="#F0003C"/><circle cx="827.1" cy="619.3" r="2.7" fill="#F0003C"/><circle cx="828.1" cy="607.4" r="2.7" fill="#F0003C"/><circle cx="829.5" cy="597.5" r="2.7" fill="#F0003C"/><circle cx="825.6" cy="639.0" r="2.7" fill="#F0003C"/><circle cx="826.6" cy="625.0" r="2.7" fill="#F0003C"/><circle cx="827.6" cy="613.0" r="2.7" fill="#F0003C"/><circle cx="828.8" cy="602.0" r="2.7" fill="#F0003C"/></g></svg><div class="b" style="left:74px;top:544.5px;width:5px;height:1px;background:#000000;"></div><div class="t" style="right:886.5px;top:538.77px;font-size:11.5px;line-height:13.5px;color:#000000;letter-spacing:-0.4px;text-align:right;">1.0E+2</div><div class="b" style="left:74px;top:567.5px;width:5px;height:1px;background:#000000;"></div><div class="t" style="right:886.5px;top:561.27px;font-size:11.5px;line-height:13.5px;color:#000000;letter-spacing:-0.4px;text-align:right;">1.0E+1</div><div class="b" style="left:74px;top:589.5px;width:5px;height:1px;background:#000000;"></div><div class="t" style="right:886.5px;top:583.77px;font-size:11.5px;line-height:13.5px;color:#000000;letter-spacing:-0.4px;text-align:right;">1.0E+0</div><div class="b" style="left:74px;top:611.5px;width:5px;height:1px;background:#000000;"></div><div class="t" style="right:886.5px;top:606.27px;font-size:11.5px;line-height:13.5px;color:#000000;letter-spacing:-0.4px;text-align:right;">1.0E-1</div><div class="b" style="left:74px;top:634.5px;width:5px;height:1px;background:#000000;"></div><div class="t" style="right:886.5px;top:628.77px;font-size:11.5px;line-height:13.5px;color:#000000;letter-spacing:-0.4px;text-align:right;">1.0E-2</div><div class="b" style="left:74px;top:657.5px;width:5px;height:1px;background:#000000;"></div><div class="t" style="right:886.5px;top:651.27px;font-size:11.5px;line-height:13.5px;color:#000000;letter-spacing:-0.4px;text-align:right;">1.0E-3</div><div class="b" style="left:74px;top:679.5px;width:5px;height:1px;background:#000000;"></div><div class="t" style="right:886.5px;top:673.77px;font-size:11.5px;line-height:13.5px;color:#000000;letter-spacing:-0.4px;text-align:right;">1.0E-4</div><div class="b" style="left:74px;top:701.5px;width:5px;height:1px;background:#000000;"></div><div class="t" style="right:886.5px;top:696.27px;font-size:11.5px;line-height:13.5px;color:#000000;letter-spacing:-0.4px;text-align:right;">1.0E-5</div><div class="b" style="left:74px;top:724.5px;width:5px;height:1px;background:#000000;"></div><div class="t" style="right:886.5px;top:718.77px;font-size:11.5px;line-height:13.5px;color:#000000;letter-spacing:-0.4px;text-align:right;">1.0E-6</div><div class="b" style="left:74px;top:747.5px;width:5px;height:1px;background:#000000;"></div><div class="t" style="right:886.5px;top:741.27px;font-size:11.5px;line-height:13.5px;color:#000000;letter-spacing:-0.4px;text-align:right;">1.0E-7</div><div class="b" style="left:74px;top:769.5px;width:5px;height:1px;background:#000000;"></div><div class="t" style="right:886.5px;top:763.77px;font-size:11.5px;line-height:13.5px;color:#000000;letter-spacing:-0.4px;text-align:right;">1.0E-8</div><div class="b" style="left:74px;top:791.5px;width:5px;height:1px;background:#000000;"></div><div class="t" style="right:886.5px;top:786.27px;font-size:11.5px;line-height:13.5px;color:#000000;letter-spacing:-0.4px;text-align:right;">1.0E-9</div><div class="b" style="left:74px;top:814.5px;width:5px;height:1px;background:#000000;"></div><div class="t" style="right:886.5px;top:808.77px;font-size:11.5px;line-height:13.5px;color:#000000;letter-spacing:-0.4px;text-align:right;">1.0E-10</div><div class="b" style="left:81px;top:817px;width:1px;height:5px;background:#000000;"></div><div class="b" style="left:98px;top:817px;width:1px;height:5px;background:#000000;"></div><div class="b" style="left:133px;top:817px;width:1px;height:5px;background:#000000;"></div><div class="b" style="left:168px;top:817px;width:1px;height:5px;background:#000000;"></div><div class="b" style="left:203px;top:817px;width:1px;height:5px;background:#000000;"></div><div class="b" style="left:238px;top:817px;width:1px;height:5px;background:#000000;"></div><div class="b" style="left:273px;top:817px;width:1px;height:5px;background:#000000;"></div><div class="b" style="left:291px;top:817px;width:1px;height:5px;background:#000000;"></div><div class="t" style="left:51.0px;width:60px;top:823.07px;font-size:11.5px;line-height:13.5px;color:#000000;letter-spacing:-0.2px;text-align:center;">14:30</div><div class="t" style="left:103.5px;width:60px;top:823.07px;font-size:11.5px;line-height:13.5px;color:#000000;letter-spacing:-0.2px;text-align:center;">15:00</div><div class="t" style="left:138.5px;width:60px;top:823.07px;font-size:11.5px;line-height:13.5px;color:#000000;letter-spacing:-0.2px;text-align:center;">15:20</div><div class="t" style="left:173.5px;width:60px;top:823.07px;font-size:11.5px;line-height:13.5px;color:#000000;letter-spacing:-0.2px;text-align:center;">15:40</div><div class="t" style="left:208.5px;width:60px;top:823.07px;font-size:11.5px;line-height:13.5px;color:#000000;letter-spacing:-0.2px;text-align:center;">16:00</div><div class="t" style="left:261.0px;width:60px;top:823.07px;font-size:11.5px;line-height:13.5px;color:#000000;letter-spacing:-0.2px;text-align:center;">16:30</div><div class="t" style="left:168.0px;width:60px;top:839.34px;font-size:12px;line-height:14px;color:#000000;text-align:center;">Time</div><div class="t" style="left:-36.5px;width:120px;top:671.70px;font-size:12px;line-height:14px;color:#000000;text-align:center;transform:rotate(-90deg);transform-origin:50% 50%;">Pressure (mbar)</div><div class="b" style="left:387px;top:533px;width:5px;height:1px;background:#000000;"></div><div class="t" style="right:574.5px;top:526.97px;font-size:11.5px;line-height:13.5px;color:#000000;letter-spacing:-0.4px;text-align:right;">55.0</div><div class="b" style="left:387px;top:555px;width:5px;height:1px;background:#000000;"></div><div class="t" style="right:574.5px;top:549.23px;font-size:11.5px;line-height:13.5px;color:#000000;letter-spacing:-0.4px;text-align:right;">50.0</div><div class="b" style="left:387px;top:578px;width:5px;height:1px;background:#000000;"></div><div class="t" style="right:574.5px;top:571.50px;font-size:11.5px;line-height:13.5px;color:#000000;letter-spacing:-0.4px;text-align:right;">45.0</div><div class="b" style="left:387px;top:600px;width:5px;height:1px;background:#000000;"></div><div class="t" style="right:574.5px;top:593.76px;font-size:11.5px;line-height:13.5px;color:#000000;letter-spacing:-0.4px;text-align:right;">40.0</div><div class="b" style="left:387px;top:622px;width:5px;height:1px;background:#000000;"></div><div class="t" style="right:574.5px;top:616.03px;font-size:11.5px;line-height:13.5px;color:#000000;letter-spacing:-0.4px;text-align:right;">35.0</div><div class="b" style="left:387px;top:645px;width:5px;height:1px;background:#000000;"></div><div class="t" style="right:574.5px;top:638.29px;font-size:11.5px;line-height:13.5px;color:#000000;letter-spacing:-0.4px;text-align:right;">30.0</div><div class="b" style="left:387px;top:667px;width:5px;height:1px;background:#000000;"></div><div class="t" style="right:574.5px;top:660.56px;font-size:11.5px;line-height:13.5px;color:#000000;letter-spacing:-0.4px;text-align:right;">25.0</div><div class="b" style="left:387px;top:689px;width:5px;height:1px;background:#000000;"></div><div class="t" style="right:574.5px;top:682.82px;font-size:11.5px;line-height:13.5px;color:#000000;letter-spacing:-0.4px;text-align:right;">20.0</div><div class="b" style="left:387px;top:711px;width:5px;height:1px;background:#000000;"></div><div class="t" style="right:574.5px;top:705.09px;font-size:11.5px;line-height:13.5px;color:#000000;letter-spacing:-0.4px;text-align:right;">15.0</div><div class="b" style="left:387px;top:734px;width:5px;height:1px;background:#000000;"></div><div class="t" style="right:574.5px;top:727.35px;font-size:11.5px;line-height:13.5px;color:#000000;letter-spacing:-0.4px;text-align:right;">10.0</div><div class="b" style="left:387px;top:756px;width:5px;height:1px;background:#000000;"></div><div class="t" style="right:574.5px;top:749.62px;font-size:11.5px;line-height:13.5px;color:#000000;letter-spacing:-0.4px;text-align:right;">5.0</div><div class="b" style="left:387px;top:778px;width:5px;height:1px;background:#000000;"></div><div class="t" style="right:574.5px;top:771.88px;font-size:11.5px;line-height:13.5px;color:#000000;letter-spacing:-0.4px;text-align:right;">0.0</div><div class="b" style="left:387px;top:800px;width:5px;height:1px;background:#000000;"></div><div class="t" style="right:574.5px;top:794.15px;font-size:11.5px;line-height:13.5px;color:#000000;letter-spacing:-0.4px;text-align:right;">-5.0</div><div class="b" style="left:394px;top:802.5px;width:1px;height:5px;background:#000000;"></div><div class="b" style="left:425px;top:802.5px;width:1px;height:5px;background:#000000;"></div><div class="b" style="left:518px;top:802.5px;width:1px;height:5px;background:#000000;"></div><div class="b" style="left:611px;top:802.5px;width:1px;height:5px;background:#000000;"></div><div class="t" style="left:364.0px;width:60px;top:809.67px;font-size:11.5px;line-height:13.5px;color:#000000;letter-spacing:-0.2px;text-align:center;">15:20</div><div class="t" style="left:354.0px;width:80px;top:824.67px;font-size:11.5px;line-height:13.5px;color:#000000;letter-spacing:-0.2px;text-align:center;">5/22/2023</div><div class="t" style="left:488.5px;width:60px;top:809.67px;font-size:11.5px;line-height:13.5px;color:#000000;letter-spacing:-0.2px;text-align:center;">16:00</div><div class="t" style="left:478.5px;width:80px;top:824.67px;font-size:11.5px;line-height:13.5px;color:#000000;letter-spacing:-0.2px;text-align:center;">5/22/2023</div><div class="t" style="left:581.5px;width:60px;top:809.67px;font-size:11.5px;line-height:13.5px;color:#000000;letter-spacing:-0.2px;text-align:center;">16:30</div><div class="t" style="left:571.5px;width:80px;top:824.67px;font-size:11.5px;line-height:13.5px;color:#000000;letter-spacing:-0.2px;text-align:center;">5/22/2023</div><div class="t" style="left:453.5px;width:60px;top:841.34px;font-size:12px;line-height:14px;color:#000000;text-align:center;">Time</div><div class="t" style="left:293.5px;width:120px;top:659.00px;font-size:12px;line-height:14px;color:#000000;text-align:center;transform:rotate(-90deg);transform-origin:50% 50%;">Temperature (K)</div><div class="b" style="left:725px;top:544px;width:6px;height:1px;background:#000000;"></div><div class="t" style="right:235px;top:538.17px;font-size:11.5px;line-height:13.5px;color:#000000;letter-spacing:-0.4px;text-align:right;">3500</div><div class="b" style="left:725px;top:579px;width:6px;height:1px;background:#000000;"></div><div class="t" style="right:235px;top:573.11px;font-size:11.5px;line-height:13.5px;color:#000000;letter-spacing:-0.4px;text-align:right;">3000</div><div class="b" style="left:725px;top:614px;width:6px;height:1px;background:#000000;"></div><div class="t" style="right:235px;top:608.05px;font-size:11.5px;line-height:13.5px;color:#000000;letter-spacing:-0.4px;text-align:right;">2500</div><div class="b" style="left:725px;top:649px;width:6px;height:1px;background:#000000;"></div><div class="t" style="right:235px;top:642.99px;font-size:11.5px;line-height:13.5px;color:#000000;letter-spacing:-0.4px;text-align:right;">2000</div><div class="b" style="left:725px;top:684px;width:6px;height:1px;background:#000000;"></div><div class="t" style="right:235px;top:677.94px;font-size:11.5px;line-height:13.5px;color:#000000;letter-spacing:-0.4px;text-align:right;">1500</div><div class="b" style="left:725px;top:719px;width:6px;height:1px;background:#000000;"></div><div class="t" style="right:235px;top:712.88px;font-size:11.5px;line-height:13.5px;color:#000000;letter-spacing:-0.4px;text-align:right;">1000</div><div class="b" style="left:725px;top:754px;width:6px;height:1px;background:#000000;"></div><div class="t" style="right:235px;top:747.82px;font-size:11.5px;line-height:13.5px;color:#000000;letter-spacing:-0.4px;text-align:right;">500</div><div class="b" style="left:725px;top:789px;width:6px;height:1px;background:#000000;"></div><div class="t" style="right:235px;top:782.77px;font-size:11.5px;line-height:13.5px;color:#000000;letter-spacing:-0.4px;text-align:right;">0</div><div class="b" style="left:733px;top:790.5px;width:1px;height:5px;background:#000000;"></div><div class="b" style="left:782px;top:790.5px;width:1px;height:5px;background:#000000;"></div><div class="b" style="left:834px;top:790.5px;width:1px;height:5px;background:#000000;"></div><div class="b" style="left:885px;top:790.5px;width:1px;height:5px;background:#000000;"></div><div class="b" style="left:912px;top:790.5px;width:1px;height:5px;background:#000000;"></div><div class="t" style="left:703.0px;width:60px;top:798.07px;font-size:11.5px;line-height:13.5px;color:#000000;letter-spacing:-0.2px;text-align:center;">15:21</div><div class="t" style="left:693.0px;width:80px;top:813.07px;font-size:11.5px;line-height:13.5px;color:#000000;letter-spacing:-0.2px;text-align:center;">5/22/2023</div><div class="t" style="left:804.0px;width:60px;top:798.07px;font-size:11.5px;line-height:13.5px;color:#000000;letter-spacing:-0.2px;text-align:center;">16:00</div><div class="t" style="left:794.0px;width:80px;top:813.07px;font-size:11.5px;line-height:13.5px;color:#000000;letter-spacing:-0.2px;text-align:center;">5/22/2023</div><div class="t" style="left:882.5px;width:60px;top:798.07px;font-size:11.5px;line-height:13.5px;color:#000000;letter-spacing:-0.2px;text-align:center;">16:30</div><div class="t" style="left:872.5px;width:80px;top:813.07px;font-size:11.5px;line-height:13.5px;color:#000000;letter-spacing:-0.2px;text-align:center;">5/22/2023</div><div class="t" style="left:796.6px;width:60px;top:828.84px;font-size:12px;line-height:14px;color:#000000;text-align:center;">Time</div><div class="t" style="left:629.0px;width:120px;top:659.50px;font-size:12px;line-height:14px;color:#000000;text-align:center;transform:rotate(-90deg);transform-origin:50% 50%;">Counts/sec</div>
</body></html>
